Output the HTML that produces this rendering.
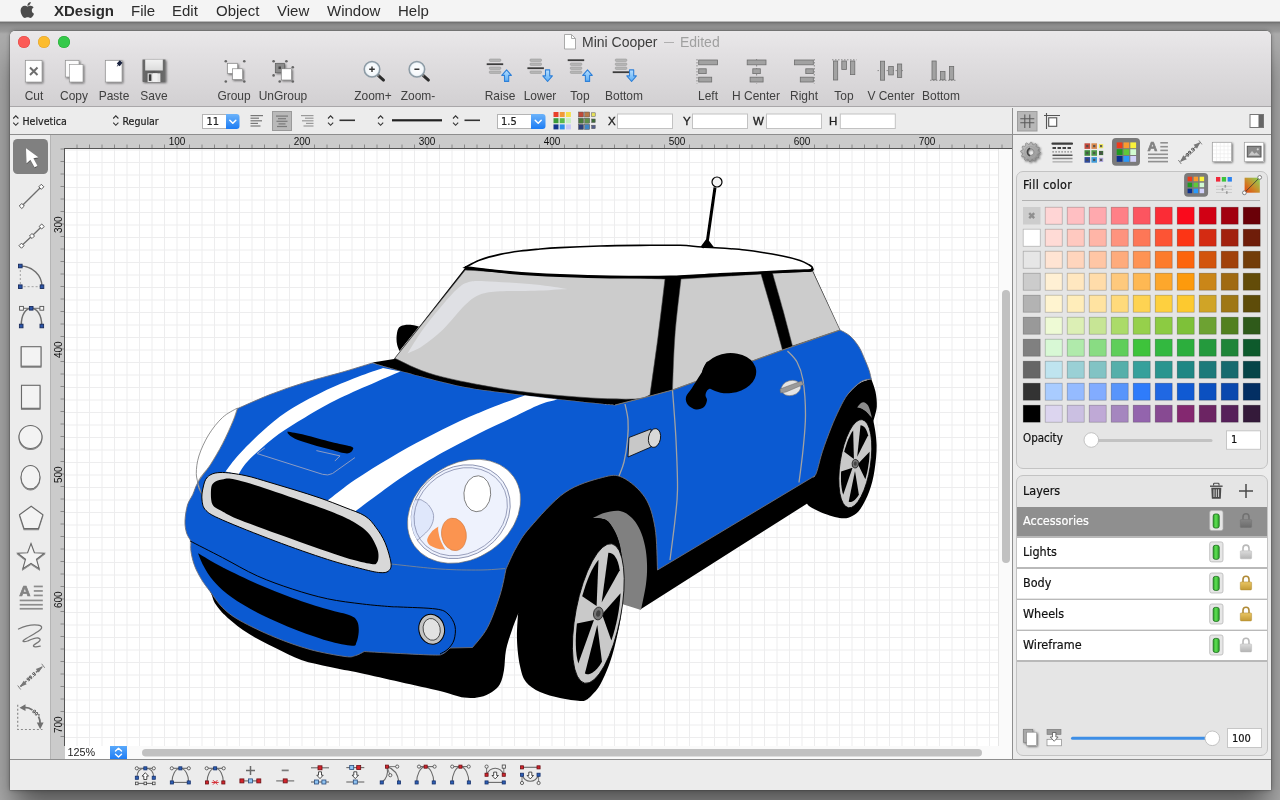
<!DOCTYPE html>
<html lang="en">
<head>
<meta charset="utf-8">
<title>XDesign - Mini Cooper</title>
<style>
*{box-sizing:border-box;margin:0;padding:0}
html,body{width:1280px;height:800px;overflow:hidden}
body{position:relative;background:#8d8d8d;-webkit-font-smoothing:antialiased;font-family:"Liberation Sans",sans-serif;color:#222}
.abs{position:absolute}
#desk{position:absolute;left:0;top:0;width:1280px;height:800px;background:#acacac}
#topstrip{position:absolute;left:0;top:22px;width:1280px;height:12px;background:linear-gradient(#6c6c6c 0,#868686 2px,#929292 5px,#999999 9px,rgba(153,153,153,0) 12px)}
#menubar{will-change:transform;position:absolute;left:0;top:0;width:1280px;height:22px;background:#f4f4f4;border-bottom:1px solid #b8b8b8}
#menubar span{position:absolute;top:2px;font-size:15px;line-height:18px;color:#2c2c2c;white-space:nowrap}
#win{will-change:transform;position:absolute;left:10px;top:31px;width:1261px;height:759px;background:#ececec;border-radius:5px 5px 0 0;box-shadow:0 0 0 .5px rgba(60,60,60,.45),0 0 5px rgba(0,0,0,.3),0 22px 30px -4px rgba(0,0,0,.52);overflow:hidden}
#tb{position:absolute;left:0;top:0;width:1261px;height:76px;background:linear-gradient(#eae8ea 0,#e2e0e2 30%,#d2d0d2 100%);border-bottom:1px solid #a9a7a9}
.tl{position:absolute;top:5px;width:12px;height:12px;border-radius:50%}
.tlab{position:absolute;top:57px;font-size:13px;line-height:15px;color:#404040;white-space:nowrap;transform:translateX(-50%) scaleX(.92)}
#fb{position:absolute;left:0;top:77px;width:1261px;height:27px;background:#ececec;border-bottom:1px solid #8e8e8e}
.hum{font-family:"DejaVu Sans Condensed","DejaVu Sans",sans-serif;-webkit-text-stroke:.2px}
#pal{position:absolute;left:0;top:104px;width:41px;height:624px;background:#ececec;border-right:1px solid #b5b5b5}
#rulh{position:absolute;left:41px;top:104px;width:961px;height:14px;background:#cbcbcb}
#rulv{position:absolute;left:41px;top:104px;width:14px;height:624px;background:#cbcbcb}
#canvas{position:absolute;left:54px;top:117px;width:935px;height:598px;background:#fff;overflow:hidden}
#vsb{position:absolute;left:988px;top:118px;width:14px;height:610px;background:#fafafa;border-left:1px solid #e6e6e6}
#hsb{position:absolute;left:55px;top:715px;width:934px;height:13px;background:#fafafa}
#vdiv{position:absolute;left:1002px;top:77px;width:1px;height:652px;background:#8e8e8e}
#bot{position:absolute;left:0;top:728px;width:1261px;height:31px;background:#ececec;border-top:1px solid #8e8e8e}
#rp{position:absolute;left:1003px;top:104px;width:258px;height:624px;background:#ececec}
</style>
</head>
<body>
<div id="desk"></div>
<div id="topstrip"></div>
<div id="menubar"><svg width="40" height="22" viewBox="0 0 40 22" style="position:absolute;left:0;top:0"><path transform="translate(20.45 0.86) scale(0.0357)" fill="#4b4b4b" d="M318.700 268.700c-.2-36.700 16.400-64.400 50-84.800-18.800-26.900-47.200-41.700-84.700-44.600-35.500-2.800-74.300 20.700-88.500 20.700-15 0-49.400-19.700-76.400-19.700C63.300 141.200 4 184.800 4 273.500q0 39.300 14.400 81.200c12.800 36.700 59 126.700 107.200 125.200 25.200-.6 43-17.900 75.800-17.900 31.800 0 48.300 17.900 76.400 17.900 48.600-.7 90.400-82.500 102.600-119.300-65.200-30.700-61.700-90-61.700-91.900zm-56.600-164.200c27.300-32.400 24.800-61.900 24-72.500-24.100 1.400-52 16.400-67.900 34.900-17.500 19.800-27.800 44.300-25.600 71.900 26.100 2 49.900-11.400 69.500-34.300z"/></svg>

<span style="left:54px;font-weight:bold">XDesign</span>
<span style="left:131px">File</span>
<span style="left:172px">Edit</span>
<span style="left:216px">Object</span>
<span style="left:277px">View</span>
<span style="left:327px">Window</span>
<span style="left:398px">Help</span>
</div>
<div id="win">
<div id="tb">
<div class="tl" style="left:8px;background:#fc5b57;box-shadow:inset 0 0 0 .5px #de4643"></div>
<div class="tl" style="left:28px;background:#fdbc2e;box-shadow:inset 0 0 0 .5px #dea033"></div>
<div class="tl" style="left:48px;background:#35c94a;box-shadow:inset 0 0 0 .5px #24a732"></div>
<div class="abs" style="left:572px;top:3px;font-size:14px;line-height:17px;white-space:nowrap;color:#3c3c3c">Mini Cooper<span style="color:#a0a0a0"><span style="font-size:10px;margin:0 6px 0 6.5px;position:relative;top:-2px">—</span>Edited</span></div>
<svg width="1280" height="110" viewBox="0 0 1280 110" style="position:absolute;left:-10px;top:-31px;overflow:visible">
<defs><filter id="ds" x="-20%" y="-20%" width="150%" height="150%"><feGaussianBlur in="SourceAlpha" stdDeviation="0.9"/><feOffset dx="0.5" dy="1" result="b"/><feComponentTransfer><feFuncA type="linear" slope="0.55"/></feComponentTransfer><feMerge><feMergeNode/><feMergeNode in="SourceGraphic"/></feMerge></filter><linearGradient id="gblue" x1="0" y1="0" x2="0" y2="1"><stop offset="0" stop-color="#b9e0ff"/><stop offset="1" stop-color="#58acf5"/></linearGradient><linearGradient id="gfl" x1="0" y1="0" x2="1" y2="0"><stop offset="0" stop-color="#6a6a6a"/><stop offset="0.5" stop-color="#585858"/><stop offset="1" stop-color="#6e6e6e"/></linearGradient><linearGradient id="glab" x1="0" y1="0" x2="0" y2="1"><stop offset="0" stop-color="#f2f2f2"/><stop offset="1" stop-color="#dcdcdc"/></linearGradient><radialGradient id="glens" cx="0.5" cy="0.5" r="0.5"><stop offset="0" stop-color="#ffffff"/><stop offset="0.75" stop-color="#f4f8fb"/><stop offset="1" stop-color="#c5d4de"/></radialGradient></defs>
<path d="M564.500 34.500h7l4 4v10.500h-11z" fill="#fff" stroke="#a2a2a2" stroke-width="0.9"/><path d="M571.500 34.500v4h4" fill="none" stroke="#a2a2a2" stroke-width="0.9"/>
<g filter="url(#ds)"><rect x="25.500" y="60.500" width="16.500" height="21.500" fill="#fff" stroke="#8a8a8a" stroke-width="0.6"/></g>
<path d="M30 67.500l7.500 7.500M37.500 67.500l-7.500 7.500" stroke="#6e6e6e" stroke-width="2" fill="none"/>
<g filter="url(#ds)"><rect x="65.500" y="60.500" width="13.500" height="16.500" fill="#fafafa" stroke="#8a8a8a" stroke-width="0.6"/><rect x="69.500" y="64.500" width="13.500" height="17.500" fill="#fff" stroke="#8a8a8a" stroke-width="0.6"/></g>
<g filter="url(#ds)"><rect x="105.500" y="60.500" width="16.500" height="21.500" fill="#fff" stroke="#8a8a8a" stroke-width="0.6"/></g>
<path d="M119.800 60.300l-3 3.200 1.200 1.200-1.300 1.500 0.400 0.300 1.400-1.300 1.200 1.100 2.800-3.500z" fill="#1b2440"/>
<g filter="url(#ds)"><path d="M142.500 59.500h23v22.500h-22.500l-0.500-0.500z" fill="url(#gfl)"/></g>
<rect x="145.200" y="59.500" width="17.600" height="11" fill="url(#glab)"/>
<rect x="147.600" y="73.300" width="12.800" height="8.700" fill="#e4e4e4"/><rect x="148.800" y="74.300" width="2.600" height="6.600" fill="#3a3a3a"/><rect x="153" y="73.300" width="4.500" height="8.700" fill="#f0f0f0"/>
<g filter="url(#ds)"><rect x="227.500" y="63.300" width="10.200" height="10.200" fill="#fff" stroke="#777" stroke-width="0.6"/><rect x="232.500" y="68.800" width="10.200" height="10.700" fill="#fff" stroke="#777" stroke-width="0.6"/></g>
<circle cx="225.8" cy="61.2" r="1.300" fill="#666"/>
<circle cx="244.3" cy="61.2" r="1.300" fill="#666"/>
<circle cx="225.8" cy="81.5" r="1.300" fill="#666"/>
<circle cx="244.3" cy="81.5" r="1.300" fill="#666"/>
<g filter="url(#ds)"><rect x="275.300" y="63.300" width="9.200" height="9.500" fill="#8c8c8c" stroke="#555" stroke-width="0.6"/><rect x="281.300" y="68.800" width="10.200" height="11.200" fill="#fff" stroke="#777" stroke-width="0.6"/></g>
<rect x="278.500" y="66.500" width="2.500" height="2.500" fill="#444"/>
<circle cx="273.6" cy="61.2" r="1.300" fill="#666"/>
<circle cx="286.4" cy="61.2" r="1.300" fill="#666"/>
<circle cx="273.6" cy="75.4" r="1.300" fill="#666"/>
<circle cx="292.8" cy="67.3" r="1.300" fill="#666"/>
<circle cx="292.8" cy="81.5" r="1.300" fill="#666"/>
<circle cx="279.7" cy="81.5" r="1.300" fill="#666"/>
<path d="M378.5 75.6L383.5 80.1" stroke="#2c2c2c" stroke-width="3" stroke-linecap="round"/>
<path d="M377.0 74.3L379.0 76.1" stroke="#777" stroke-width="1.600"/>
<circle cx="372.0" cy="69.3" r="7.800" fill="url(#glens)" stroke="#8d9ba5" stroke-width="1.500"/>
<path d="M369.2 69.3h5.600M372.0 66.5v5.600" stroke="#333" stroke-width="1.400"/>
<path d="M423.4 75.6L428.4 80.1" stroke="#2c2c2c" stroke-width="3" stroke-linecap="round"/>
<path d="M421.9 74.3L423.9 76.1" stroke="#777" stroke-width="1.600"/>
<circle cx="416.9" cy="69.3" r="7.800" fill="url(#glens)" stroke="#8d9ba5" stroke-width="1.500"/>
<path d="M414.4 69.3h5" stroke="#333" stroke-width="1.500"/>
<rect x="489.3" y="59.0" width="11.500" height="2.400" rx="0.800" fill="#b8b8b8" stroke="#8e8e8e" stroke-width="0.5"/>
<rect x="486.7" y="63.3" width="16.500" height="1.800" fill="#3c3c3c"/>
<rect x="489.3" y="67.0" width="11.500" height="2.400" rx="0.800" fill="#b8b8b8" stroke="#8e8e8e" stroke-width="0.5"/>
<rect x="489.3" y="71.0" width="11.500" height="2.400" rx="0.800" fill="#b8b8b8" stroke="#8e8e8e" stroke-width="0.5"/>
<path d="M506.6 69.800l4.800 5.600h-2.700v6h-4.200v-6h-2.700z" fill="url(#gblue)" stroke="#2f80d8" stroke-width="1.1" stroke-linejoin="round"/>
<rect x="530.0" y="59.0" width="11.500" height="2.400" rx="0.800" fill="#b8b8b8" stroke="#8e8e8e" stroke-width="0.5"/>
<rect x="530.0" y="63.0" width="11.500" height="2.400" rx="0.800" fill="#b8b8b8" stroke="#8e8e8e" stroke-width="0.5"/>
<rect x="527.4" y="67.3" width="16.500" height="1.800" fill="#3c3c3c"/>
<rect x="530.0" y="71.0" width="11.500" height="2.400" rx="0.800" fill="#b8b8b8" stroke="#8e8e8e" stroke-width="0.5"/>
<path d="M547.6 81.500l4.800-5.600h-2.700v-6h-4.200v6h-2.700z" fill="url(#gblue)" stroke="#2f80d8" stroke-width="1.1" stroke-linejoin="round"/>
<rect x="567.7" y="59.3" width="16.500" height="1.800" fill="#3c3c3c"/>
<rect x="570.3" y="63.0" width="11.500" height="2.400" rx="0.800" fill="#b8b8b8" stroke="#8e8e8e" stroke-width="0.5"/>
<rect x="570.3" y="67.0" width="11.500" height="2.400" rx="0.800" fill="#b8b8b8" stroke="#8e8e8e" stroke-width="0.5"/>
<rect x="570.3" y="71.0" width="11.500" height="2.400" rx="0.800" fill="#b8b8b8" stroke="#8e8e8e" stroke-width="0.5"/>
<path d="M587.5 69.800l4.800 5.600h-2.700v6h-4.200v-6h-2.700z" fill="url(#gblue)" stroke="#2f80d8" stroke-width="1.1" stroke-linejoin="round"/>
<rect x="615.3" y="59.0" width="11.500" height="2.400" rx="0.800" fill="#b8b8b8" stroke="#8e8e8e" stroke-width="0.5"/>
<rect x="615.3" y="63.0" width="11.500" height="2.400" rx="0.800" fill="#b8b8b8" stroke="#8e8e8e" stroke-width="0.5"/>
<rect x="615.3" y="67.0" width="11.500" height="2.400" rx="0.800" fill="#b8b8b8" stroke="#8e8e8e" stroke-width="0.5"/>
<rect x="612.7" y="71.3" width="16.500" height="1.800" fill="#3c3c3c"/>
<path d="M631.6 81.500l4.800-5.600h-2.700v-6h-4.200v6h-2.700z" fill="url(#gblue)" stroke="#2f80d8" stroke-width="1.1" stroke-linejoin="round"/>
<path d="M697 59V83.500" stroke="#777" stroke-width="0.8" stroke-dasharray="1.500 1.500" fill="none"/>
<rect x="698.7" y="60.0" width="18.8" height="4.8" fill="#a2a2a2" stroke="#6e6e6e" stroke-width="0.8"/>
<rect x="698.7" y="68.8" width="7.5" height="4.8" fill="#a2a2a2" stroke="#6e6e6e" stroke-width="0.8"/>
<rect x="698.7" y="77.2" width="13.0" height="4.8" fill="#a2a2a2" stroke="#6e6e6e" stroke-width="0.8"/>
<path d="M756.600 59V83.500" stroke="#777" stroke-width="0.8" stroke-dasharray="1.500 1.500" fill="none"/>
<rect x="747.2" y="60.0" width="18.8" height="4.8" fill="#a2a2a2" stroke="#6e6e6e" stroke-width="0.8"/>
<rect x="752.8" y="68.8" width="7.5" height="4.8" fill="#a2a2a2" stroke="#6e6e6e" stroke-width="0.8"/>
<rect x="750.1" y="77.2" width="13.0" height="4.8" fill="#a2a2a2" stroke="#6e6e6e" stroke-width="0.8"/>
<path d="M814.300 59V83.500" stroke="#777" stroke-width="0.8" stroke-dasharray="1.500 1.500" fill="none"/>
<rect x="794.5" y="60.0" width="18.8" height="4.8" fill="#a2a2a2" stroke="#6e6e6e" stroke-width="0.8"/>
<rect x="805.8" y="68.8" width="7.5" height="4.8" fill="#a2a2a2" stroke="#6e6e6e" stroke-width="0.8"/>
<rect x="800.3" y="77.2" width="13.0" height="4.8" fill="#a2a2a2" stroke="#6e6e6e" stroke-width="0.8"/>
<path d="M832 59.800H856.500" stroke="#777" stroke-width="0.8" stroke-dasharray="1.500 1.500" fill="none"/>
<rect x="833.5" y="61.0" width="4.2" height="19.0" fill="#a2a2a2" stroke="#6e6e6e" stroke-width="0.8"/>
<rect x="841.8" y="61.0" width="4.6" height="8.5" fill="#a2a2a2" stroke="#6e6e6e" stroke-width="0.8"/>
<rect x="850.6" y="61.0" width="4.2" height="13.6" fill="#a2a2a2" stroke="#6e6e6e" stroke-width="0.8"/>
<path d="M877.500 70.600H904" stroke="#777" stroke-width="0.8" stroke-dasharray="1.500 1.500" fill="none"/>
<rect x="880.4" y="61.2" width="4.2" height="19.0" fill="#a2a2a2" stroke="#6e6e6e" stroke-width="0.8"/>
<rect x="888.7" y="66.4" width="4.6" height="8.5" fill="#a2a2a2" stroke="#6e6e6e" stroke-width="0.8"/>
<rect x="897.5" y="64.0" width="4.2" height="13.4" fill="#a2a2a2" stroke="#6e6e6e" stroke-width="0.8"/>
<path d="M930 80.300H956" stroke="#777" stroke-width="0.8" stroke-dasharray="1.500 1.500" fill="none"/>
<rect x="932.0" y="61.0" width="4.2" height="18.8" fill="#a2a2a2" stroke="#6e6e6e" stroke-width="0.8"/>
<rect x="940.6" y="71.5" width="4.4" height="8.3" fill="#a2a2a2" stroke="#6e6e6e" stroke-width="0.8"/>
<rect x="949.5" y="66.4" width="4.2" height="13.4" fill="#a2a2a2" stroke="#6e6e6e" stroke-width="0.8"/>
</svg>
<div class="tlab" style="left:23.5px">Cut</div>
<div class="tlab" style="left:63.5px">Copy</div>
<div class="tlab" style="left:103.5px">Paste</div>
<div class="tlab" style="left:143.5px">Save</div>
<div class="tlab" style="left:224.0px">Group</div>
<div class="tlab" style="left:272.6px">UnGroup</div>
<div class="tlab" style="left:363.0px">Zoom+</div>
<div class="tlab" style="left:408.0px">Zoom-</div>
<div class="tlab" style="left:489.5px">Raise</div>
<div class="tlab" style="left:530.0px">Lower</div>
<div class="tlab" style="left:570.0px">Top</div>
<div class="tlab" style="left:614.0px">Bottom</div>
<div class="tlab" style="left:697.6px">Left</div>
<div class="tlab" style="left:745.5px">H Center</div>
<div class="tlab" style="left:793.6px">Right</div>
<div class="tlab" style="left:833.5px">Top</div>
<div class="tlab" style="left:880.5px">V Center</div>
<div class="tlab" style="left:931.0px">Bottom</div>
</div>
<div id="fb"><svg width="1280" height="30" viewBox="0 108 1280 30" style="position:absolute;left:-10px;top:0;overflow:visible">
<defs><linearGradient id="gbtn" x1="0" y1="0" x2="0" y2="1"><stop offset="0" stop-color="#6cb3fa"/><stop offset="1" stop-color="#1c7cf4"/></linearGradient></defs>
<path d="M13.2 118.5l2.600-2.600 2.600 2.600M13.2 122.7l2.600 2.600 2.600-2.600" stroke="#333" stroke-width="1.100" fill="none"/>
<path d="M113.2 118.5l2.600-2.600 2.600 2.600M113.2 122.7l2.600 2.600 2.600-2.600" stroke="#333" stroke-width="1.100" fill="none"/>
<rect x="202.5" y="114.5" width="34.0" height="14.0" fill="#fff" stroke="#b4b4b4" stroke-width="1"/>
<path d="M226.0 114.0H236.5a3 3 0 0 1 3 3V126.0a3 3 0 0 1-3 3H226.0Z" fill="url(#gbtn)"/>
<path d="M229.8 120.3l3 3 3-3" stroke="#fff" stroke-width="1.500" fill="none" stroke-linecap="round" stroke-linejoin="round"/>
<rect x="497.5" y="114.5" width="45.0" height="14.0" fill="#fff" stroke="#b4b4b4" stroke-width="1"/>
<path d="M531.0 114.0H542.5a3 3 0 0 1 3 3V126.0a3 3 0 0 1-3 3H531.0Z" fill="url(#gbtn)"/>
<path d="M535.2 120.3l3 3 3-3" stroke="#fff" stroke-width="1.500" fill="none" stroke-linecap="round" stroke-linejoin="round"/>
<rect x="250.5" y="115.0" width="12.5" height="1.200" fill="#777"/>
<rect x="250.5" y="117.6" width="8.5" height="1.200" fill="#777"/>
<rect x="250.5" y="120.2" width="11.5" height="1.200" fill="#777"/>
<rect x="250.5" y="122.8" width="7.5" height="1.200" fill="#777"/>
<rect x="250.5" y="125.4" width="10.0" height="1.200" fill="#777"/>
<rect x="272.500" y="111.500" width="19" height="19" fill="#b9b9b9" stroke="#9a9a9a" stroke-width="1"/>
<rect x="276.0" y="115.5" width="12.0" height="1.200" fill="#7a7a7a"/>
<rect x="278.0" y="118.1" width="8.0" height="1.200" fill="#7a7a7a"/>
<rect x="276.5" y="120.7" width="11.0" height="1.200" fill="#7a7a7a"/>
<rect x="278.5" y="123.3" width="7.0" height="1.200" fill="#7a7a7a"/>
<rect x="277.0" y="125.9" width="10.0" height="1.200" fill="#7a7a7a"/>
<rect x="301.0" y="115.0" width="12.5" height="1.200" fill="#999"/>
<rect x="305.0" y="117.6" width="8.5" height="1.200" fill="#999"/>
<rect x="302.0" y="120.2" width="11.5" height="1.200" fill="#999"/>
<rect x="306.0" y="122.8" width="7.5" height="1.200" fill="#999"/>
<rect x="303.5" y="125.4" width="10.0" height="1.200" fill="#999"/>
<path d="M328.0 118.5l2.600-2.600 2.600 2.600M328.0 122.7l2.600 2.600 2.600-2.600" stroke="#333" stroke-width="1.100" fill="none"/>
<rect x="339.500" y="119.500" width="15.500" height="1.600" fill="#333"/>
<path d="M378.0 118.5l2.600-2.600 2.600 2.600M378.0 122.7l2.600 2.600 2.600-2.600" stroke="#333" stroke-width="1.100" fill="none"/>
<rect x="392" y="119.200" width="50" height="2.200" fill="#222"/>
<path d="M453.0 118.5l2.600-2.600 2.600 2.600M453.0 122.7l2.600 2.600 2.600-2.600" stroke="#333" stroke-width="1.100" fill="none"/>
<rect x="464.500" y="119.500" width="15.500" height="1.600" fill="#333"/>
<rect x="553.5" y="112.0" width="5" height="5" fill="#e8402a"/>
<rect x="559.7" y="112.0" width="5" height="5" fill="#f19a38"/>
<rect x="565.9" y="112.0" width="5" height="5" fill="#f5e04a"/>
<rect x="553.5" y="118.2" width="5" height="5" fill="#3a9a3a"/>
<rect x="559.7" y="118.2" width="5" height="5" fill="#59b94a"/>
<rect x="565.9" y="118.2" width="5" height="5" fill="#c8eec0"/>
<rect x="553.5" y="124.4" width="5" height="5" fill="#14358c"/>
<rect x="559.7" y="124.4" width="5" height="5" fill="#2e8eea"/>
<rect x="565.9" y="124.4" width="5" height="5" fill="#c9c8f5"/>
<rect x="578.5" y="112.0" width="5.0" height="5.0" fill="#c04a38" stroke="#555" stroke-width="0.5"/>
<rect x="584.7" y="112.0" width="5.0" height="5.0" fill="#b77a48" stroke="#555" stroke-width="0.5"/>
<rect x="591.7" y="112.8" width="3.5" height="3.5" fill="#e8e25a" stroke="#555" stroke-width="0.5"/>
<rect x="578.5" y="118.2" width="5.0" height="5.0" fill="#4a7a3c" stroke="#555" stroke-width="0.5"/>
<rect x="584.7" y="118.2" width="5.0" height="5.0" fill="#5f8f4c" stroke="#555" stroke-width="0.5"/>
<rect x="591.7" y="119.0" width="3.5" height="3.5" fill="#3e6a38" stroke="#555" stroke-width="0.5"/>
<rect x="578.5" y="124.4" width="5.0" height="5.0" fill="#2c3f7a" stroke="#555" stroke-width="0.5"/>
<rect x="584.7" y="124.4" width="5.0" height="5.0" fill="#3f86c4" stroke="#555" stroke-width="0.5"/>
<rect x="591.7" y="125.2" width="3.5" height="3.5" fill="#55608a" stroke="#555" stroke-width="0.5"/>
<rect x="617.5" y="114" width="55.0" height="14.500" fill="#fff" stroke="#c2c2c2" stroke-width="1"/>
<rect x="692.5" y="114" width="55.0" height="14.500" fill="#fff" stroke="#c2c2c2" stroke-width="1"/>
<rect x="766.5" y="114" width="55.0" height="14.500" fill="#fff" stroke="#c2c2c2" stroke-width="1"/>
<rect x="840.3" y="114" width="55.0" height="14.500" fill="#fff" stroke="#c2c2c2" stroke-width="1"/>
<rect x="1017.500" y="111.500" width="19.500" height="19.500" fill="#b7b7b7" stroke="#9c9c9c" stroke-width="1"/>
<path d="M1024.800 114.500V128M1029.800 114.500V128M1020.300 118.800H1034.300M1020.300 122.700H1034.300" stroke="#5a5a5a" stroke-width="1.100" fill="none"/>
<path d="M1046.500 113V129M1044 115.500H1060" stroke="#555" stroke-width="1.100" fill="none"/><rect x="1048.700" y="117.800" width="8" height="8.500" fill="#fff" stroke="#555" stroke-width="1.100"/>
<rect x="1250" y="114.500" width="13.500" height="13" fill="#fff" stroke="#777" stroke-width="1"/><rect x="1258.500" y="115" width="4.500" height="12" fill="#666"/>
</svg>
<div class="abs hum" style="left:12.5px;top:6.0px;font-size:10.5px;line-height:14px;white-space:nowrap;color:#222;">Helvetica</div>
<div class="abs hum" style="left:112.5px;top:6.0px;font-size:10.5px;line-height:14px;white-space:nowrap;color:#222;">Regular</div>
<div class="abs hum" style="left:196.5px;top:7.0px;font-size:11px;line-height:14px;white-space:nowrap;color:#222;">11</div>
<div class="abs hum" style="left:491.0px;top:7.0px;font-size:11px;line-height:14px;white-space:nowrap;color:#222;">1.5</div>
<div class="abs " style="left:598.0px;top:6.0px;font-size:11.5px;line-height:14px;white-space:nowrap;color:#222;-webkit-text-stroke:.35px;color:#222">X</div>
<div class="abs " style="left:673.0px;top:6.0px;font-size:11.5px;line-height:14px;white-space:nowrap;color:#222;-webkit-text-stroke:.35px">Y</div>
<div class="abs " style="left:743.0px;top:6.0px;font-size:11.5px;line-height:14px;white-space:nowrap;color:#222;-webkit-text-stroke:.35px">W</div>
<div class="abs " style="left:819.0px;top:6.0px;font-size:11.5px;line-height:14px;white-space:nowrap;color:#222;-webkit-text-stroke:.35px">H</div></div>
<div id="pal"><svg width="1280" height="800" viewBox="0 0 1280 800" style="position:absolute;left:-10px;top:-135px;overflow:visible">
<defs><filter id="ds2" x="-20%" y="-20%" width="150%" height="150%"><feGaussianBlur in="SourceAlpha" stdDeviation="0.7"/><feOffset dx="0.3" dy="0.8"/><feComponentTransfer><feFuncA type="linear" slope="0.45"/></feComponentTransfer><feMerge><feMergeNode/><feMergeNode in="SourceGraphic"/></feMerge></filter></defs>
<rect x="13" y="139" width="35" height="35" rx="4.500" fill="#808080"/>
<g filter="url(#ds2)"><path d="M26 148.200L26.600 163.200L30.400 159.800L34.600 167.300L37.400 165.700L33.300 158.300L38.300 157.300Z" fill="#fff"/></g>
<path d="M21.800 206L41.300 186.800" stroke="#6e6e6e" stroke-width="1.300"/>
<rect x="20.0" y="204.2" width="3.6" height="3.6" fill="#fff" stroke="#555" stroke-width="0.9" transform="rotate(45 21.8 206.0)"/>
<rect x="39.5" y="185.0" width="3.6" height="3.6" fill="#fff" stroke="#555" stroke-width="0.9" transform="rotate(45 41.3 186.8)"/>
<path d="M21.500 245.700L32 236L41.700 226.500" stroke="#6e6e6e" stroke-width="1.300"/>
<rect x="19.7" y="243.9" width="3.6" height="3.6" fill="#fff" stroke="#555" stroke-width="0.9" transform="rotate(45 21.5 245.7)"/>
<rect x="30.2" y="234.2" width="3.6" height="3.6" fill="#fff" stroke="#555" stroke-width="0.9" transform="rotate(45 32.0 236.0)"/>
<rect x="39.9" y="224.7" width="3.6" height="3.6" fill="#fff" stroke="#555" stroke-width="0.9" transform="rotate(45 41.7 226.5)"/>
<path d="M20.300 266V286.700H42" stroke="#999" stroke-width="0.9" stroke-dasharray="2 2" fill="none"/>
<path d="M20.300 266A21.500 20.700 0 0 1 42 286.700" stroke="#6e6e6e" stroke-width="1.500" fill="none"/>
<rect x="18.5" y="264.2" width="3.6" height="3.6" fill="#2a55a8" stroke="#1a2c5c" stroke-width="0.9"/>
<rect x="40.2" y="284.9" width="3.6" height="3.6" fill="#2a55a8" stroke="#1a2c5c" stroke-width="0.9"/>
<rect x="18.5" y="284.9" width="3.6" height="3.6" fill="#2a55a8" stroke="#1a2c5c" stroke-width="0.9"/>
<path d="M21.500 308.300H41.750" stroke="#6e6e6e" stroke-width="1"/>
<path d="M21.200 326C21.200 314 26 308.300 31.250 308.300C36.500 308.300 41.750 314 41.750 326" stroke="#6e6e6e" stroke-width="1.500" fill="none"/>
<rect x="19.6" y="306.4" width="3.8" height="3.8" fill="#f4f4f4" stroke="#555" stroke-width="0.9"/>
<rect x="39.9" y="306.4" width="3.8" height="3.8" fill="#f4f4f4" stroke="#555" stroke-width="0.9"/>
<rect x="29.4" y="306.5" width="3.6" height="3.6" fill="#2a55a8" stroke="#1a2c5c" stroke-width="0.9"/>
<rect x="19.4" y="324.2" width="3.6" height="3.6" fill="#2a55a8" stroke="#1a2c5c" stroke-width="0.9"/>
<rect x="40.0" y="324.2" width="3.6" height="3.6" fill="#2a55a8" stroke="#1a2c5c" stroke-width="0.9"/>
<g filter="url(#ds2)" fill="#f3f3f3" stroke="#6a6a6a" stroke-width="1.100">
<rect x="21.200" y="346.700" width="19.800" height="19.500"/>
<rect x="21.500" y="385.300" width="18.500" height="23"/>
<circle cx="30.500" cy="437" r="11.500"/>
<ellipse cx="30.500" cy="477.200" rx="9.500" ry="11.700"/>
<path d="M31.2 506.3L42.9 514.8L38.4 528.6L24.0 528.6L19.5 514.8Z"/>
<path d="M31.0 543.5L34.4 552.8L44.3 553.2L36.5 559.3L39.2 568.8L31.0 563.3L22.8 568.8L25.5 559.3L17.7 553.2L27.6 552.8Z"/>
</g>
<text x="19.200" y="596.200" font-family="Liberation Sans,sans-serif" font-weight="bold" font-size="15.500" fill="#838383" stroke="#838383" stroke-width="0.700">A</text>
<rect x="33.800" y="585.6" width="9" height="1.700" fill="#8c8c8c"/>
<rect x="33.800" y="590.1" width="9" height="1.700" fill="#8c8c8c"/>
<rect x="33.800" y="594.6" width="9" height="1.700" fill="#8c8c8c"/>
<rect x="19.700" y="599.6" width="23.100" height="1.700" fill="#8c8c8c"/>
<rect x="19.700" y="603.9" width="23.100" height="1.700" fill="#8c8c8c"/>
<rect x="19.700" y="607.9" width="23.100" height="1.700" fill="#8c8c8c"/>
<path d="M18.500 629C25 626 33 624.500 38 625.200C42.500 625.800 42.500 628 40 630C35 634 27 637.500 23.700 640.200C21.500 642 25 642 27.500 641C31 639.500 35.500 637.500 38 638C40.500 638.500 40.500 640 39.500 641C37.500 643 34 644.500 33.500 645.500C33 647 36 647.200 40.200 646.200" stroke="#777" stroke-width="1.300" fill="none" stroke-linecap="round"/>
<g stroke="#777" fill="#777"><path d="M17.700 685.500L20.700 689.500M41.700 663.800L44.700 667.800" stroke-width="0.9"/><path d="M20.500 686.400L26.500 681M36 672.400L42 667" stroke-width="1.600"/><path d="M19.600 687.200L26.700 684.300L23.700 680.800ZM42.900 666.200L35.800 669.100L38.800 672.600Z" stroke="none"/></g>
<text x="31.300" y="678.600" font-family="Liberation Sans,sans-serif" font-weight="bold" font-size="5.500" fill="#333" text-anchor="middle" transform="rotate(-42 31.300 676.700)">99.9</text>
<path d="M17.700 704.700V729.500H42.500" stroke="#8a8a8a" stroke-width="1.200" stroke-dasharray="2 2" fill="none"/>
<path d="M23 707.500C27 707.300 30.500 708.500 32.500 710M38.500 716.500C39.800 719 40.200 721.500 40.200 724" stroke="#707070" stroke-width="1.700" fill="none"/>
<path d="M19.500 707.800L25.500 704.200L25.500 711ZM40.200 729.200L36.800 722.600L43.600 722.600Z" fill="#707070"/>
<text x="36" y="715.300" font-family="Liberation Sans,sans-serif" font-weight="bold" font-size="5.500" fill="#333" text-anchor="middle" transform="rotate(45 36 713.500)">90°</text>
</svg></div>
<div id="rulh"></div>
<div id="rulv"></div>
<div id="canvas"><svg width="935" height="598" viewBox="64 148 935 598" style="position:absolute;left:0;top:0">
<path d="M64.5 148V746M77.0 148V746M89.5 148V746M102.0 148V746M114.5 148V746M127.0 148V746M139.5 148V746M152.0 148V746M164.5 148V746M177.0 148V746M189.5 148V746M202.0 148V746M214.5 148V746M227.0 148V746M239.5 148V746M252.0 148V746M264.5 148V746M277.0 148V746M289.5 148V746M302.0 148V746M314.5 148V746M327.0 148V746M339.5 148V746M352.0 148V746M364.5 148V746M377.0 148V746M389.5 148V746M402.0 148V746M414.5 148V746M427.0 148V746M439.5 148V746M452.0 148V746M464.5 148V746M477.0 148V746M489.5 148V746M502.0 148V746M514.5 148V746M527.0 148V746M539.5 148V746M552.0 148V746M564.5 148V746M577.0 148V746M589.5 148V746M602.0 148V746M614.5 148V746M627.0 148V746M639.5 148V746M652.0 148V746M664.5 148V746M677.0 148V746M689.5 148V746M702.0 148V746M714.5 148V746M727.0 148V746M739.5 148V746M752.0 148V746M764.5 148V746M777.0 148V746M789.5 148V746M802.0 148V746M814.5 148V746M827.0 148V746M839.5 148V746M852.0 148V746M864.5 148V746M877.0 148V746M889.5 148V746M902.0 148V746M914.5 148V746M927.0 148V746M939.5 148V746M952.0 148V746M964.5 148V746M977.0 148V746M989.5 148V746M64 150.0H998M64 162.5H998M64 175.0H998M64 187.5H998M64 200.0H998M64 212.5H998M64 225.0H998M64 237.5H998M64 250.0H998M64 262.5H998M64 275.0H998M64 287.5H998M64 300.0H998M64 312.5H998M64 325.0H998M64 337.5H998M64 350.0H998M64 362.5H998M64 375.0H998M64 387.5H998M64 400.0H998M64 412.5H998M64 425.0H998M64 437.5H998M64 450.0H998M64 462.5H998M64 475.0H998M64 487.5H998M64 500.0H998M64 512.5H998M64 525.0H998M64 537.5H998M64 550.0H998M64 562.5H998M64 575.0H998M64 587.5H998M64 600.0H998M64 612.5H998M64 625.0H998M64 637.5H998M64 650.0H998M64 662.5H998M64 675.0H998M64 687.5H998M64 700.0H998M64 712.5H998M64 725.0H998M64 737.5H998" stroke="#ededee" stroke-width="1" fill="none"/>
<path d="M64.5 148V746M64 148.5H999" stroke="#555" stroke-width="1" fill="none"/>
<path d="M195.0 560.0C197.6 565.3 206.9 584.5 210.3 591.8C213.7 599.1 212.6 599.6 215.5 604.0C218.4 608.4 222.2 613.0 227.8 618.0C233.4 623.0 240.9 628.8 248.8 633.8C256.7 638.8 266.2 643.4 275.0 647.8C283.8 652.2 292.1 656.8 301.3 660.0C310.5 663.2 320.2 664.8 330.0 667.0C339.8 669.2 348.3 670.5 360.0 673.0C371.7 675.5 386.7 679.0 400.0 682.0C413.3 685.0 429.3 688.4 440.0 691.0C450.7 693.6 457.3 696.6 464.0 697.6C470.7 698.6 475.3 697.9 480.0 697.0C484.7 696.1 488.7 694.2 492.0 692.0C495.3 689.8 498.0 687.7 500.0 684.0C502.0 680.3 503.0 675.7 504.0 670.0C505.0 664.3 504.7 656.7 506.0 650.0C507.3 643.3 510.0 636.0 512.0 630.0C514.0 624.0 517.0 616.7 518.0 614.0L560.0 585.0L641.0 609.0L808.0 503.0L815.0 470.0L660.0 560.0L650.0 480.0L600.0 470.0L520.0 520.0L480.0 600.0L300.0 560.0L195.0 560.0Z" fill="#000" />
<path d="M871.3 379.0C872.0 381.1 874.6 387.2 875.5 391.8C876.4 396.4 877.1 401.8 876.8 406.7C876.4 411.6 874.0 418.6 873.4 421.0L860.0 490.0L808.0 504.0L800.0 490.0L815.0 476.0C815.8 470.0 816.7 451.0 820.0 440.0C823.3 429.0 830.0 418.0 835.0 410.0C840.0 402.0 845.8 396.5 850.0 392.0C854.2 387.5 856.5 385.2 860.0 383.0C863.5 380.8 869.4 379.7 871.3 379.0Z" fill="#000" />
<path d="M593.0 518.0C594.8 517.2 599.5 514.2 604.0 513.0C608.5 511.8 615.3 510.2 620.0 511.0C624.7 511.8 628.7 514.8 632.0 518.0C635.3 521.2 637.8 525.3 640.0 530.0C642.2 534.7 643.8 540.3 645.0 546.0C646.2 551.7 646.8 557.7 647.0 564.0C647.2 570.3 647.0 576.3 646.0 584.0C645.0 591.7 641.8 605.7 641.0 610.0L622.0 604.0C622.2 598.7 623.3 581.7 623.0 572.0C622.7 562.3 621.5 553.0 620.0 546.0C618.5 539.0 616.3 534.3 614.0 530.0C611.7 525.7 609.5 522.0 606.0 520.0C602.5 518.0 595.2 518.3 593.0 518.0Z" fill="#808080" />
<path d="M856.5 408.5C857.1 407.8 858.8 405.0 860.0 404.0C861.2 403.0 862.1 402.0 863.5 402.3C864.9 402.6 866.8 403.5 868.1 405.6C869.4 407.8 870.6 412.5 871.3 415.2C871.9 417.9 871.9 420.9 872.0 422.0C871.5 420.8 870.2 416.8 869.0 415.0C867.8 413.2 866.4 412.1 865.0 411.0C863.6 409.9 862.1 408.8 860.7 408.4C859.3 408.0 857.2 408.5 856.5 408.5Z" fill="#8c8c8c" />
<path d="M372.5 363.0C367.1 364.6 351.2 369.6 340.0 372.8C328.8 376.0 316.7 378.8 305.0 382.4C293.3 386.0 281.2 390.2 270.0 394.6C258.8 399.0 242.9 406.3 237.5 408.6C236.8 410.7 235.5 415.1 233.0 421.0C230.5 426.9 226.3 436.5 222.5 443.8C218.7 451.1 214.4 458.4 210.3 464.8C206.2 471.2 200.9 477.4 198.0 482.3C195.1 487.2 194.6 490.7 192.8 494.5C191.1 498.3 188.8 500.6 187.5 505.0C186.2 509.4 185.2 516.1 185.0 520.8C184.8 525.5 185.6 529.6 186.6 533.0C187.6 536.4 190.3 539.7 191.0 541.0C191.0 542.8 190.4 547.4 191.0 551.5C191.6 555.6 192.8 560.8 194.5 565.5C196.2 570.2 198.9 575.1 201.5 579.5C204.1 583.9 206.8 587.1 210.3 591.8C213.8 596.5 217.6 602.7 222.5 607.5C227.4 612.3 231.2 615.6 240.0 620.6C248.8 625.6 263.3 632.5 275.0 637.3C286.7 642.1 298.3 646.3 310.0 649.5C321.7 652.7 337.4 655.5 345.0 656.5C352.6 657.5 352.3 656.4 355.5 655.6C358.7 654.8 362.8 652.2 364.3 651.5C368.6 651.8 378.6 652.4 390.0 653.0C401.4 653.6 423.8 654.8 432.5 655.0C441.2 655.2 439.6 655.2 442.5 654.0C445.4 652.8 448.8 649.0 450.0 648.0L472.5 647.5C475.0 644.2 482.9 636.2 487.5 627.5C492.1 618.8 496.9 604.8 500.0 595.0C503.1 585.2 505.0 573.3 506.0 569.0C507.7 565.5 512.0 554.9 516.0 548.0C520.0 541.1 521.8 536.8 530.0 527.5C538.2 518.2 552.9 500.8 565.0 492.5C577.1 484.2 592.9 480.0 602.5 477.5C612.1 475.0 615.4 474.2 622.5 477.5C629.6 480.8 639.6 489.2 645.0 497.5C650.4 505.8 652.9 515.4 655.0 527.5C657.1 539.6 657.1 562.9 657.5 570.0L815.0 475.7C815.4 474.8 816.0 474.5 817.2 470.4C818.5 466.3 820.2 458.4 822.5 451.3C824.8 444.2 828.2 435.1 831.0 428.0C833.8 420.9 836.7 414.5 839.5 408.8C842.3 403.1 844.8 398.2 848.0 394.0C851.2 389.8 855.8 385.7 858.6 383.4C861.4 381.1 862.9 380.7 865.0 380.0C867.1 379.3 870.2 379.2 871.3 379.0C870.9 377.6 870.2 373.8 869.2 370.6C868.2 367.4 866.7 363.9 865.0 360.0C863.3 356.1 861.5 351.0 859.0 347.0C856.5 343.0 853.2 338.8 850.0 336.0C846.8 333.2 841.7 331.0 840.0 330.0L782.5 350.0L672.5 390.0L650.0 396.0L615.0 405.0C610.8 404.6 606.7 404.3 590.0 402.5C573.3 400.7 536.7 396.8 515.0 394.0C493.3 391.2 479.6 390.0 460.0 386.0C440.4 382.0 412.1 373.8 397.5 370.0C382.9 366.2 376.7 364.2 372.5 363.0Z" fill="#0b5ad2" stroke="#6f6f78" stroke-width="0.9" />
<path d="M465.0 268.0L394.0 359.0L372.5 362.5C376.7 363.8 382.9 366.1 397.5 370.0C412.1 373.9 440.4 382.0 460.0 386.0C479.6 390.0 493.3 391.2 515.0 394.0C536.7 396.8 573.3 400.7 590.0 402.5C606.7 404.3 610.8 404.6 615.0 405.0L650.0 396.0L672.5 390.0L782.5 350.0L840.0 330.0L812.5 270.0C793.8 271.0 735.4 274.7 700.0 276.0C664.6 277.3 639.2 279.3 600.0 278.0C560.8 276.7 487.5 269.7 465.0 268.0Z" fill="#000" />
<path d="M419.0 326.5L399.5 351.0C399.1 350.0 397.7 347.0 397.2 345.0C396.7 343.0 396.5 341.0 396.5 339.0C396.5 337.0 396.6 334.9 397.0 333.0C397.4 331.1 397.8 328.8 399.0 327.5C400.2 326.2 401.8 325.6 404.0 325.2C406.2 324.8 409.5 324.8 412.0 325.0C414.5 325.2 417.8 326.2 419.0 326.5Z" fill="#000" />
<path d="M465.3 270.0L394.8 358.3C401.5 361.1 415.8 369.7 435.0 375.0C454.2 380.3 485.0 386.2 510.0 390.0C535.0 393.8 564.2 396.0 585.0 397.5C605.8 399.0 624.2 399.4 635.0 399.0C645.8 398.6 647.5 395.7 650.0 395.0C651.3 385.3 655.5 356.3 658.0 337.0C660.5 317.7 663.8 288.7 665.0 279.0C655.8 278.7 627.5 277.6 610.0 277.0C592.5 276.4 576.7 276.2 560.0 275.5C543.3 274.8 525.8 273.4 510.0 272.5C494.2 271.6 472.8 270.4 465.3 270.0Z" fill="#cccccc" stroke="#444" stroke-width="0.6" />
<path d="M407.5 353.5C410.0 349.6 416.7 338.1 422.5 330.0C428.3 321.9 436.7 311.9 442.5 305.0C448.3 298.1 453.3 292.5 457.5 288.8C461.7 285.0 462.9 283.8 467.5 282.5C472.1 281.2 473.8 280.9 485.0 281.2C496.2 281.6 521.2 283.2 535.0 284.5C548.8 285.8 562.1 288.2 567.5 289.0C562.1 289.3 546.2 290.4 535.0 290.8C523.8 291.1 509.2 290.6 500.0 291.2C490.8 291.9 485.8 292.2 480.0 294.5C474.2 296.8 471.2 299.1 465.0 305.0C458.8 310.9 449.6 323.2 442.5 330.0C435.4 336.8 428.3 342.1 422.5 346.0C416.7 349.9 410.0 352.2 407.5 353.5Z" fill="#dfe0e4" />
<path d="M681.0 279.0L761.0 274.0C762.8 280.3 768.4 299.3 772.0 312.0C775.6 324.7 780.8 343.7 782.5 350.0L672.5 390.0C672.9 380.8 673.6 353.5 675.0 335.0C676.4 316.5 680.0 288.3 681.0 279.0Z" fill="#cccccc" stroke="#444" stroke-width="0.5" />
<path d="M772.5 273.0L812.5 271.0L840.0 330.0L792.5 346.0C790.9 340.0 786.3 322.2 783.0 310.0C779.7 297.8 774.2 279.2 772.5 273.0Z" fill="#cccccc" stroke="#444" stroke-width="0.5" />
<path d="M465.0 267.5C467.5 266.2 474.2 262.2 480.0 260.0C485.8 257.8 493.3 255.9 500.0 254.4C506.7 252.9 513.3 251.9 520.0 251.0C526.7 250.1 533.3 249.6 540.0 249.0C546.7 248.4 550.0 248.1 560.0 247.6C570.0 247.1 586.7 246.4 600.0 246.0C613.3 245.6 626.7 245.5 640.0 245.4C653.3 245.3 669.6 245.0 680.0 245.3C690.4 245.6 691.7 246.2 702.5 247.0C713.3 247.8 731.7 248.5 745.0 250.0C758.3 251.5 773.3 254.2 782.5 256.0C791.7 257.8 795.6 259.0 800.0 260.5C804.4 262.0 806.9 263.6 809.0 264.8C811.1 266.1 812.4 267.0 812.6 268.0C812.9 269.0 813.4 270.1 810.5 270.6C807.6 271.1 803.8 270.6 795.0 271.0C786.2 271.4 770.0 272.2 757.5 272.8C745.0 273.4 734.6 273.8 720.0 274.5C705.4 275.2 688.3 276.6 670.0 277.0C651.7 277.4 628.3 277.2 610.0 277.0C591.7 276.8 576.7 276.2 560.0 275.5C543.3 274.8 525.8 273.8 510.0 272.5C494.2 271.2 472.5 268.3 465.0 267.5Z" fill="#fff" stroke="#000" stroke-width="1.6" />
<path d="M465.0 267.5C472.5 268.3 494.2 271.2 510.0 272.5C525.8 273.8 543.3 274.8 560.0 275.5C576.7 276.2 591.7 276.8 610.0 277.0C628.3 277.2 651.7 277.4 670.0 277.0C688.3 276.6 705.4 275.2 720.0 274.5C734.6 273.8 745.0 273.4 757.5 272.8C770.0 272.2 786.2 271.4 795.0 271.0C803.8 270.6 807.6 270.8 810.5 270.4C813.4 270.0 812.1 268.8 812.4 268.5" fill="none" stroke="#000" stroke-width="2.8" />
<path d="M702 247.5L707.5 240 L715 187.5" stroke="#000" stroke-width="3" fill="none"/>
<path d="M701.5 248L708 239.5L714.5 248Z" fill="#000"/>
<circle cx="717" cy="182" r="5" fill="#f4f4f4" stroke="#000" stroke-width="1.2"/>
<path d="M383.0 368.0C378.8 369.5 367.6 373.1 357.5 377.1C347.4 381.1 334.2 386.3 322.5 392.0C310.8 397.7 297.7 404.6 287.5 411.3C277.3 418.0 269.5 425.0 261.3 432.3C253.1 439.6 244.5 448.5 238.5 455.0C232.5 461.5 227.7 468.8 225.5 471.5L238.5 474.5C239.7 472.7 242.3 467.6 245.5 463.8C248.7 460.0 252.2 456.5 257.8 451.5C263.4 446.5 270.9 439.7 278.8 434.0C286.7 428.3 294.8 423.4 305.0 417.4C315.2 411.4 328.3 403.9 340.0 398.1C351.7 392.3 364.9 386.8 375.0 382.4C385.1 378.0 396.2 373.3 400.5 371.5L383.0 368.0Z" fill="#fff" />
<path d="M525.0 395.5C520.0 397.3 505.8 402.0 495.0 406.3C484.2 410.6 471.7 415.7 460.0 421.1C448.3 426.5 436.7 432.5 425.0 438.6C413.3 444.7 401.7 451.0 390.0 457.9C378.3 464.8 365.5 472.6 355.0 479.8C344.5 487.0 331.7 497.5 327.0 501.0L355.0 511.5C359.4 508.2 372.6 498.3 381.3 492.0C390.1 485.7 397.3 480.2 407.5 473.6C417.7 467.0 430.8 459.2 442.5 452.6C454.2 446.1 465.8 440.1 477.5 434.3C489.2 428.5 502.1 422.6 512.5 417.6C522.9 412.6 532.5 407.5 540.0 404.5C547.5 401.5 554.6 400.3 557.5 399.5L525.0 395.5Z" fill="#fff" />
<path d="M287.5 431.4C290.4 432.0 297.7 433.1 305.0 434.9C312.3 436.6 323.7 440.0 331.3 441.9C338.9 443.8 346.9 445.0 350.5 446.3C354.1 447.6 353.4 448.6 352.8 449.8C352.2 451.0 350.6 453.5 347.0 453.5C343.4 453.5 337.1 451.3 331.3 449.8C325.5 448.3 318.1 446.4 312.0 444.5C305.9 442.6 298.4 440.1 294.5 438.4C290.6 436.6 289.6 435.2 288.4 434.0C287.2 432.8 287.6 431.8 287.5 431.4Z" fill="#000" />
<path d="M264.8 448L257 453.5L322.5 474.3Q328 476 332.5 473.5L354.9 457.6M316.4 450.6L340 455.9L334.8 461.1" stroke="#8c9cc4" stroke-width="1" fill="none"/>
<path d="M237.4 408.0C234.9 409.6 227.3 413.0 222.5 417.5C217.7 422.0 212.4 428.6 208.5 435.0C204.6 441.4 200.9 449.6 198.9 456.0C196.9 462.4 196.3 468.5 196.3 473.5C196.3 478.5 197.9 482.2 198.9 485.8C199.9 489.4 201.8 493.8 202.4 495.4C201.7 493.2 196.7 487.4 198.0 482.3C199.3 477.2 206.2 471.2 210.3 464.8C214.4 458.4 218.7 451.1 222.5 443.8C226.3 436.5 230.5 427.0 233.0 421.0C235.5 415.0 236.7 410.2 237.4 408.0Z" fill="#fff" stroke="#777" stroke-width="0.8" />
<path d="M190.1 541.0C195.5 543.8 211.3 551.8 222.5 557.6C233.7 563.4 245.8 570.8 257.5 576.0C269.2 581.2 280.8 585.3 292.5 589.1C304.2 592.9 315.8 596.3 327.5 598.8C339.2 601.3 352.1 602.7 362.5 604.0C372.9 605.3 383.8 606.1 390.0 606.6C396.2 607.1 392.3 606.6 400.0 607.0C407.7 607.4 428.0 607.8 436.0 609.0C444.0 610.2 444.8 611.2 448.0 614.0C451.2 616.8 454.0 621.7 455.0 626.0C456.0 630.3 455.2 636.2 454.0 640.0C452.8 643.8 450.3 646.7 448.0 649.0C445.7 651.3 441.3 653.2 440.0 654.0" fill="none" stroke="#000" stroke-width="1" />
<path d="M391.0 564.0C399.2 564.8 425.2 568.0 440.0 569.0C454.8 570.0 469.2 570.1 480.0 570.0C490.8 569.9 500.8 568.8 505.0 568.6" fill="none" stroke="#8a8a8a" stroke-width="0.8" />
<path d="M207.5 477.0C204.7 479.6 203.9 484.2 203.0 488.0C202.1 491.8 201.5 496.2 202.0 500.0C202.5 503.8 202.6 507.2 206.0 510.5C209.4 513.8 211.0 514.9 222.5 520.0C234.0 525.1 257.5 534.4 275.0 541.0C292.5 547.6 312.9 554.7 327.5 559.4C342.1 564.1 353.8 566.8 362.5 569.0C371.2 571.2 375.7 572.3 380.0 572.6C384.3 572.9 386.7 572.6 388.5 571.0C390.3 569.4 391.6 567.8 391.0 563.0C390.4 558.2 387.5 548.4 385.0 542.5C382.5 536.6 379.3 531.9 376.0 527.5C372.7 523.1 370.2 519.3 365.0 516.0C359.8 512.7 352.5 510.5 345.0 507.5C337.5 504.5 328.3 500.9 320.0 498.0C311.7 495.1 303.3 492.6 295.0 490.0C286.7 487.4 278.3 484.9 270.0 482.5C261.7 480.1 253.3 477.2 245.0 475.5C236.7 473.8 226.2 472.2 220.0 472.5C213.8 472.8 210.3 474.4 207.5 477.0Z" fill="#d8d8d8" stroke="#000" stroke-width="1" />
<path d="M211.0 490.0C211.2 486.4 211.7 484.8 213.5 483.0C215.3 481.2 218.4 480.1 222.0 479.5C225.6 478.9 227.0 477.8 235.0 479.5C243.0 481.2 255.8 485.3 270.0 490.0C284.2 494.7 307.5 502.9 320.0 507.5C332.5 512.1 338.3 514.4 345.0 517.5C351.7 520.6 355.8 523.1 360.0 526.0C364.2 528.9 367.2 531.3 370.0 535.0C372.8 538.7 375.6 544.5 377.0 548.0C378.4 551.5 378.5 553.6 378.5 556.0C378.5 558.4 378.2 561.2 377.0 562.5C375.8 563.8 376.6 564.8 371.3 564.0C366.0 563.2 358.1 561.7 345.0 557.6C331.9 553.5 310.0 545.6 292.5 539.3C275.0 533.0 251.7 524.6 240.0 520.0C228.3 515.4 227.1 514.1 222.5 511.5C217.9 508.9 214.4 508.1 212.5 504.5C210.6 500.9 210.8 493.6 211.0 490.0Z" fill="#000" />
<path d="M198.0 553.3C202.1 555.6 212.6 562.2 222.5 567.3C232.4 572.4 245.8 578.8 257.5 583.9C269.2 589.0 280.8 593.7 292.5 597.9C304.2 602.1 317.9 606.4 327.5 609.3C337.1 612.2 345.3 613.4 350.3 615.4C355.3 617.4 355.9 618.7 357.3 621.5C358.7 624.3 358.9 628.5 358.7 632.0C358.5 635.5 357.5 640.2 356.4 642.5C355.3 644.8 356.8 646.0 352.0 645.7C347.2 645.4 337.4 643.7 327.5 640.8C317.6 637.9 304.2 633.2 292.5 628.5C280.8 623.8 267.7 618.0 257.5 612.8C247.3 607.5 238.6 602.2 231.3 597.0C224.0 591.8 218.5 586.5 213.8 581.3C209.1 576.0 205.9 570.2 203.3 565.5C200.7 560.8 198.9 555.3 198.0 553.3Z" fill="#000" />
<ellipse cx="431.6" cy="629.4" rx="12.8" ry="15" fill="#c4c4c4" stroke="#000" stroke-width="1" transform="rotate(-12 431 629)"/>
<ellipse cx="431.6" cy="629.4" rx="8.5" ry="11" fill="#e2e2e2" stroke="#333" stroke-width="0.8" transform="rotate(-12 431.5 629)"/>
<ellipse cx="464" cy="511.3" rx="60.5" ry="47.5" fill="#fff" stroke="#666" stroke-width="0.6" transform="rotate(-34.7 464 511.3)"/>
<clipPath id="lens"><ellipse cx="460.7" cy="511.7" rx="51.9" ry="44.3" transform="rotate(-35 460.7 511.7)"/></clipPath>
<ellipse cx="460.7" cy="511.7" rx="51.9" ry="44.3" fill="#eef2fd" stroke="#7f87a8" stroke-width="0.8" transform="rotate(-35 460.7 511.7)"/>
<g clip-path="url(#lens)">
<path d="M421.0 499.7C422.2 500.6 426.4 502.4 428.5 505.0C430.6 507.6 433.4 511.8 433.6 515.6C433.9 519.4 432.6 524.0 430.0 528.0C427.4 532.0 420.0 537.8 418.0 539.8L400.0 540.0L400.0 500.0L421.0 499.7Z" fill="#dfe7fb" stroke="#7f87a8" stroke-width="0.7" />
</g>
<ellipse cx="460.7" cy="511.7" rx="49" ry="41.5" fill="none" stroke="#7f87a8" stroke-width="0.7" transform="rotate(-35 460.7 511.7)"/>
<ellipse cx="477.3" cy="493.75" rx="13.4" ry="18" fill="#fff" stroke="#666" stroke-width="0.8" transform="rotate(4 477.3 493.75)"/>
<path d="M438.3 526.6C437.2 527.5 433.3 529.9 431.5 532.0C429.7 534.1 427.8 537.1 427.3 539.0C426.8 540.9 427.6 542.3 428.3 543.5C429.0 544.7 429.6 545.1 431.2 546.0C432.9 546.9 435.7 548.2 438.0 548.8C440.3 549.4 444.1 549.6 445.3 549.7C444.5 548.2 441.8 543.7 440.6 540.6C439.4 537.5 438.7 533.6 438.3 531.2C437.9 528.9 438.3 527.4 438.3 526.6Z" fill="#fb9450" />
<ellipse cx="453.9" cy="534.4" rx="12.4" ry="16.4" fill="#fb9450" stroke="#c9743c" stroke-width="0.5" transform="rotate(-10 453.9 534.4)"/>
<path d="M625.0 404.0C625.5 406.7 627.6 414.0 628.0 420.0C628.4 426.0 628.2 433.0 627.5 440.0C626.8 447.0 625.4 456.0 624.0 462.0C622.6 468.0 619.8 473.7 619.0 476.0" fill="none" stroke="#a2a2a2" stroke-width="1.3" />
<path d="M672.5 390.0C673.1 398.3 675.2 423.3 676.0 440.0C676.8 456.7 677.7 476.7 677.5 490.0C677.3 503.3 676.2 508.3 675.0 520.0C673.8 531.7 670.8 553.3 670.0 560.0" fill="none" stroke="#a2a2a2" stroke-width="1.3" />
<path d="M787.5 351.0C789.1 352.8 794.4 357.2 797.0 362.0C799.6 366.8 801.6 371.2 803.0 380.0C804.4 388.8 805.5 403.3 805.5 415.0C805.5 426.7 804.1 438.8 803.0 450.0C801.9 461.2 799.7 477.1 799.0 482.5" fill="none" stroke="#a2a2a2" stroke-width="1.3" />
<path d="M840 330L782.5 350L672.5 390L650 396L615 405" stroke="#777" stroke-width="1" fill="none"/>
<path d="M629 437.5L651 429L651 447L628 457Z" fill="#c8c8c8" stroke="#000" stroke-width="0.8"/>
<ellipse cx="654.5" cy="438" rx="6" ry="9.5" fill="#d8d8d8" stroke="#000" stroke-width="0.8" transform="rotate(10 654.5 438)"/>
<ellipse cx="729" cy="373.2" rx="27.3" ry="20" fill="#000" transform="rotate(-6 729 373.2)"/>
<path d="M709.0 362.0C705.7 359.7 704.8 367.7 702.0 372.0C699.2 376.3 694.7 383.8 692.0 388.0C689.3 392.2 686.7 394.2 686.0 397.0C685.3 399.8 686.3 402.9 688.0 405.0C689.7 407.1 693.3 409.1 696.0 409.4C698.7 409.7 702.2 408.6 704.0 407.0C705.8 405.4 706.8 402.0 707.0 400.0C707.2 398.0 705.2 396.8 705.5 395.0C705.8 393.2 706.2 390.5 709.0 389.0C711.8 387.5 722.0 390.5 722.0 386.0C722.0 381.5 712.3 364.3 709.0 362.0Z" fill="#000" />
<ellipse cx="791" cy="388" rx="10" ry="7.5" fill="#e4e4e4" stroke="#777" stroke-width="0.6" transform="rotate(-15 791 388)"/>
<path d="M780 389L801.5 381L803.5 384.5L786 392L780.5 393Z" fill="#9a9a9a" stroke="#666" stroke-width="0.5"/>
<path d="M518.0 614.0C517.8 618.3 516.7 631.3 517.0 640.0C517.3 648.7 518.5 659.0 520.0 666.0C521.5 673.0 522.7 677.7 526.0 682.0C529.3 686.3 534.3 689.3 540.0 692.0C545.7 694.7 553.3 696.5 560.0 698.0C566.7 699.5 575.7 700.7 580.0 701.0C584.3 701.3 584.0 701.0 586.0 700.0C588.0 699.0 589.7 697.5 592.0 695.0C594.3 692.5 597.2 690.0 600.0 685.0C602.8 680.0 606.5 671.7 609.0 665.0C611.5 658.3 613.2 652.2 615.0 645.0C616.8 637.8 618.8 628.8 620.0 622.0C621.2 615.2 621.5 612.3 622.0 604.0C622.5 595.7 623.3 581.7 623.0 572.0C622.7 562.3 621.5 553.0 620.0 546.0C618.5 539.0 616.3 534.3 614.0 530.0C611.7 525.7 609.5 522.0 606.0 520.0C602.5 518.0 595.2 518.3 593.0 518.0L560.0 540.0L518.0 614.0Z" fill="#000" />
<path d="M806.5 502.3C807.0 503.0 807.0 504.7 809.7 506.5C812.4 508.3 817.2 510.9 822.5 512.9C827.8 514.9 836.6 517.7 841.6 518.2C846.6 518.7 849.0 517.6 852.2 516.0C855.4 514.4 857.9 512.7 860.7 508.6C863.5 504.5 866.9 498.0 869.2 491.6C871.5 485.2 873.3 478.2 874.5 470.4C875.7 462.6 876.8 453.1 876.6 445.0C876.4 436.9 874.7 426.6 873.4 421.6C872.1 416.6 870.4 416.8 869.0 415.0C867.6 413.2 866.4 412.1 865.0 411.0C863.6 409.9 862.9 409.2 860.7 408.4C858.5 407.6 853.5 406.4 852.0 406.0L835.0 455.0L806.5 502.3Z" fill="#000" />
<g transform="translate(598.3 613.5) rotate(11.0)">
<ellipse rx="22.5" ry="71.0" fill="#c9c9c9" stroke="#000" stroke-width="0.8"/>
<path d="M-10.1 -52.9L-11.7 -49.5L-13.2 -45.5L-14.6 -41.1L-15.8 -36.3L-16.9 -31.1L-17.8 -25.6L-18.5 -19.9L-19.1 -13.9L-3.1 -7.1Z" fill="#000"/>
<path d="M-19.1 13.9L-18.5 19.9L-17.8 25.6L-16.9 31.1L-15.8 36.3L-14.6 41.1L-13.2 45.5L-11.7 49.5L-10.1 52.9L-3.1 7.1Z" fill="#000"/>
<path d="M-1.7 61.5L0.3 61.8L2.2 61.4L4.2 60.4L6.0 58.7L7.9 56.5L9.6 53.8L11.3 50.4L12.8 46.6L1.2 11.5Z" fill="#000"/>
<path d="M18.0 24.1L18.7 18.3L19.2 12.3L19.5 6.2L19.6 0.0L19.5 -6.2L19.2 -12.3L18.7 -18.3L18.0 -24.1L3.8 0.0Z" fill="#000"/>
<path d="M12.8 -46.6L11.3 -50.4L9.6 -53.8L7.9 -56.5L6.0 -58.7L4.2 -60.4L2.2 -61.4L0.3 -61.8L-1.7 -61.5L1.2 -11.5Z" fill="#000"/>
<ellipse rx="4.8" ry="6.4" fill="#777" stroke="#222" stroke-width="0.8"/>
<ellipse rx="2.2" ry="3.2" fill="#444"/>
</g>
<g transform="translate(855.3 463.7) rotate(8.8)">
<ellipse rx="15.2" ry="44.6" fill="#c9c9c9" stroke="#000" stroke-width="0.8"/>
<path d="M-7.2 -32.5L-8.2 -30.5L-9.1 -28.1L-9.9 -25.6L-10.7 -22.8L-11.4 -19.8L-11.9 -16.7L-12.4 -13.4L-12.8 -10.0L-2.1 -4.5Z" fill="#000"/>
<path d="M-12.8 10.0L-12.4 13.4L-11.9 16.7L-11.4 19.8L-10.7 22.8L-9.9 25.6L-9.1 28.1L-8.2 30.5L-7.2 32.5L-2.1 4.5Z" fill="#000"/>
<path d="M-0.7 38.7L0.5 38.8L1.7 38.5L2.9 37.8L4.1 36.9L5.2 35.7L6.3 34.1L7.3 32.3L8.3 30.2L0.8 7.2Z" fill="#000"/>
<path d="M12.3 13.9L12.7 10.5L13.0 7.1L13.2 3.6L13.2 0.0L13.2 -3.6L13.0 -7.1L12.7 -10.5L12.3 -13.9L2.6 0.0Z" fill="#000"/>
<path d="M8.3 -30.2L7.3 -32.3L6.3 -34.1L5.2 -35.7L4.1 -36.9L2.9 -37.8L1.7 -38.5L0.5 -38.8L-0.7 -38.7L0.8 -7.2Z" fill="#000"/>
<ellipse rx="3.2" ry="4.3" fill="#777" stroke="#222" stroke-width="0.8"/>
<ellipse rx="1.5" ry="2.1" fill="#444"/>
</g>
</svg></div>
<div id="vsb"><div class="abs" style="left:3px;top:141px;width:8px;height:273px;border-radius:4px;background:#c1c1c1"></div></div>
<div id="hsb"></div>
<div id="vdiv"></div>
<svg width="1280" height="800" viewBox="0 0 1280 800" style="position:absolute;left:-10px;top:-31px;overflow:visible;pointer-events:none">
<path d="M77.0 144.500V148M89.5 144.500V148M102.0 144.500V148M114.5 144.500V148M127.0 144.500V148M139.5 144.500V148M152.0 144.500V148M164.5 144.500V148M177.0 144.500V148M189.5 144.500V148M202.0 144.500V148M214.5 144.500V148M227.0 144.500V148M239.5 144.500V148M252.0 144.500V148M264.5 144.500V148M277.0 144.500V148M289.5 144.500V148M302.0 144.500V148M314.5 144.500V148M327.0 144.500V148M339.5 144.500V148M352.0 144.500V148M364.5 144.500V148M377.0 144.500V148M389.5 144.500V148M402.0 144.500V148M414.5 144.500V148M427.0 144.500V148M439.5 144.500V148M452.0 144.500V148M464.5 144.500V148M477.0 144.500V148M489.5 144.500V148M502.0 144.500V148M514.5 144.500V148M527.0 144.500V148M539.5 144.500V148M552.0 144.500V148M564.5 144.500V148M577.0 144.500V148M589.5 144.500V148M602.0 144.500V148M614.5 144.500V148M627.0 144.500V148M639.5 144.500V148M652.0 144.500V148M664.5 144.500V148M677.0 144.500V148M689.5 144.500V148M702.0 144.500V148M714.5 144.500V148M727.0 144.500V148M739.5 144.500V148M752.0 144.500V148M764.5 144.500V148M777.0 144.500V148M789.5 144.500V148M802.0 144.500V148M814.5 144.500V148M827.0 144.500V148M839.5 144.500V148M852.0 144.500V148M864.5 144.500V148M877.0 144.500V148M889.5 144.500V148M902.0 144.500V148M914.5 144.500V148M927.0 144.500V148M939.5 144.500V148M952.0 144.500V148M964.5 144.500V148M977.0 144.500V148M989.5 144.500V148M1002.0 144.500V148M60.500 149.0H64M60.500 161.5H64M60.500 174.0H64M60.500 186.5H64M60.500 199.0H64M60.500 211.5H64M60.500 224.0H64M60.500 236.5H64M60.500 249.0H64M60.500 261.5H64M60.500 274.0H64M60.500 286.5H64M60.500 299.0H64M60.500 311.5H64M60.500 324.0H64M60.500 336.5H64M60.500 349.0H64M60.500 361.5H64M60.500 374.0H64M60.500 386.5H64M60.500 399.0H64M60.500 411.5H64M60.500 424.0H64M60.500 436.5H64M60.500 449.0H64M60.500 461.5H64M60.500 474.0H64M60.500 486.5H64M60.500 499.0H64M60.500 511.5H64M60.500 524.0H64M60.500 536.5H64M60.500 549.0H64M60.500 561.5H64M60.500 574.0H64M60.500 586.5H64M60.500 599.0H64M60.500 611.5H64M60.500 624.0H64M60.500 636.5H64M60.500 649.0H64M60.500 661.5H64M60.500 674.0H64M60.500 686.5H64M60.500 699.0H64M60.500 711.5H64M60.500 724.0H64M60.500 736.5H64" stroke="#8a8a8a" stroke-width="1" fill="none"/>
<path d="M64 148.500H1012" stroke="#555" stroke-width="1"/>
<text x="177" y="145.300" font-family="Liberation Sans,sans-serif" font-size="10" fill="#111" text-anchor="middle">100</text>
<text x="302" y="145.300" font-family="Liberation Sans,sans-serif" font-size="10" fill="#111" text-anchor="middle">200</text>
<text x="427" y="145.300" font-family="Liberation Sans,sans-serif" font-size="10" fill="#111" text-anchor="middle">300</text>
<text x="552" y="145.300" font-family="Liberation Sans,sans-serif" font-size="10" fill="#111" text-anchor="middle">400</text>
<text x="677" y="145.300" font-family="Liberation Sans,sans-serif" font-size="10" fill="#111" text-anchor="middle">500</text>
<text x="802" y="145.300" font-family="Liberation Sans,sans-serif" font-size="10" fill="#111" text-anchor="middle">600</text>
<text x="927" y="145.300" font-family="Liberation Sans,sans-serif" font-size="10" fill="#111" text-anchor="middle">700</text>
<text x="61.600" y="224.7" font-family="Liberation Sans,sans-serif" font-size="10" fill="#111" text-anchor="middle" transform="rotate(-90 61.600 224.7)">300</text>
<text x="61.600" y="349.7" font-family="Liberation Sans,sans-serif" font-size="10" fill="#111" text-anchor="middle" transform="rotate(-90 61.600 349.7)">400</text>
<text x="61.600" y="474.7" font-family="Liberation Sans,sans-serif" font-size="10" fill="#111" text-anchor="middle" transform="rotate(-90 61.600 474.7)">500</text>
<text x="61.600" y="599.7" font-family="Liberation Sans,sans-serif" font-size="10" fill="#111" text-anchor="middle" transform="rotate(-90 61.600 599.7)">600</text>
<text x="61.600" y="724.7" font-family="Liberation Sans,sans-serif" font-size="10" fill="#111" text-anchor="middle" transform="rotate(-90 61.600 724.7)">700</text>
</svg>
<div id="rp"><div class="abs" style="left:3px;top:35.500px;width:252px;height:298.500px;border:1px solid #c3c3c3;border-radius:7px;background:#e5e5e5"></div>
<div class="abs" style="left:3px;top:339.500px;width:252px;height:281.500px;border:1px solid #c3c3c3;border-radius:7px;background:#e5e5e5"></div>
<div class="abs hum" style="left:4px;top:372.0px;width:250px;height:29.0px;background:#8f8f8f;color:#fff;font-size:12.500px;line-height:28.0px;padding-left:6px;white-space:nowrap">Accessories</div>
<div class="abs hum" style="left:4px;top:401.5px;width:250px;height:30.5px;background:#fff;color:#111;font-size:12.500px;line-height:29.5px;padding-left:6px;white-space:nowrap">Lights</div>
<div class="abs hum" style="left:4px;top:433.5px;width:250px;height:29.5px;background:#fff;color:#111;font-size:12.500px;line-height:28.5px;padding-left:6px;white-space:nowrap">Body</div>
<div class="abs hum" style="left:4px;top:464.5px;width:250px;height:29.5px;background:#fff;color:#111;font-size:12.500px;line-height:28.5px;padding-left:6px;white-space:nowrap">Wheels</div>
<div class="abs hum" style="left:4px;top:495.5px;width:250px;height:29.5px;background:#fff;color:#111;font-size:12.500px;line-height:28.5px;padding-left:6px;white-space:nowrap">Wireframe</div>
<div class="abs" style="left:4px;top:401.0px;width:250px;height:1.500px;background:#b9b9b9"></div>
<div class="abs" style="left:4px;top:432.3px;width:250px;height:1.500px;background:#b9b9b9"></div>
<div class="abs" style="left:4px;top:463.5px;width:250px;height:1.500px;background:#b9b9b9"></div>
<div class="abs" style="left:4px;top:494.5px;width:250px;height:1.500px;background:#b9b9b9"></div>
<div class="abs" style="left:4px;top:525.3px;width:250px;height:1.500px;background:#b9b9b9"></div>
<div class="abs hum" style="left:10px;top:42px;font-size:12.500px;letter-spacing:0.3px;line-height:16px;color:#111;white-space:nowrap">Fill color</div>
<div class="abs hum" style="left:10px;top:348px;font-size:12.500px;line-height:16px;color:#111;white-space:nowrap">Layers</div>
<div class="abs hum" style="left:10px;top:296px;font-size:11.500px;line-height:14px;color:#111;white-space:nowrap">Opacity</div>
<div class="abs" style="left:9px;top:65px;width:238px;height:1px;background:#b2b2b2"></div>
<svg width="258" height="624" viewBox="1013 135 258 624" style="position:absolute;left:0;top:0;overflow:visible">
<defs><filter id="ds3" x="-20%" y="-20%" width="150%" height="150%"><feGaussianBlur in="SourceAlpha" stdDeviation="0.8"/><feOffset dx="0.5" dy="1"/><feComponentTransfer><feFuncA type="linear" slope="0.55"/></feComponentTransfer><feMerge><feMergeNode/><feMergeNode in="SourceGraphic"/></feMerge></filter><linearGradient id="ggrad" x1="0" y1="1" x2="1" y2="0"><stop offset="0" stop-color="#e8420c"/><stop offset="0.5" stop-color="#c8902c"/><stop offset="1" stop-color="#86d85a"/></linearGradient><linearGradient id="ggear" x1="0" y1="0" x2="1" y2="1"><stop offset="0" stop-color="#c8c8c8"/><stop offset="1" stop-color="#8a8a8a"/></linearGradient><linearGradient id="gled" x1="0" y1="0" x2="1" y2="0"><stop offset="0" stop-color="#2aa12a"/><stop offset="0.45" stop-color="#5fe052"/><stop offset="1" stop-color="#2aa12a"/></linearGradient><linearGradient id="ggold" x1="0" y1="0" x2="0" y2="1"><stop offset="0" stop-color="#e9c562"/><stop offset="1" stop-color="#c39a35"/></linearGradient><linearGradient id="ggray" x1="0" y1="0" x2="0" y2="1"><stop offset="0" stop-color="#dcdcdc"/><stop offset="1" stop-color="#b4b4b4"/></linearGradient><linearGradient id="ggray2" x1="0" y1="0" x2="0" y2="1"><stop offset="0" stop-color="#858585"/><stop offset="1" stop-color="#6c6c6c"/></linearGradient></defs>
<rect x="1023.0" y="207.0" width="17.500" height="17.500" fill="#cdcdcd"/>
<path d="M1029.2 213.2l5 5M1034.2 213.2l-5 5" stroke="#8f8f8f" stroke-width="2.400"/>
<rect x="1045.2" y="207.2" width="17" height="17" fill="#ffd5d5" stroke="rgba(0,0,0,0.28)" stroke-width="0.7"/>
<rect x="1067.2" y="207.2" width="17" height="17" fill="#ffbfc2" stroke="rgba(0,0,0,0.28)" stroke-width="0.7"/>
<rect x="1089.2" y="207.2" width="17" height="17" fill="#ffa9ae" stroke="rgba(0,0,0,0.28)" stroke-width="0.7"/>
<rect x="1111.2" y="207.2" width="17" height="17" fill="#ff8087" stroke="rgba(0,0,0,0.28)" stroke-width="0.7"/>
<rect x="1133.2" y="207.2" width="17" height="17" fill="#fc5560" stroke="rgba(0,0,0,0.28)" stroke-width="0.7"/>
<rect x="1155.2" y="207.2" width="17" height="17" fill="#fb2c36" stroke="rgba(0,0,0,0.28)" stroke-width="0.7"/>
<rect x="1177.2" y="207.2" width="17" height="17" fill="#fa0a1c" stroke="rgba(0,0,0,0.28)" stroke-width="0.7"/>
<rect x="1199.2" y="207.2" width="17" height="17" fill="#d10014" stroke="rgba(0,0,0,0.28)" stroke-width="0.7"/>
<rect x="1221.2" y="207.2" width="17" height="17" fill="#a2000f" stroke="rgba(0,0,0,0.28)" stroke-width="0.7"/>
<rect x="1243.2" y="207.2" width="17" height="17" fill="#6a0008" stroke="rgba(0,0,0,0.28)" stroke-width="0.7"/>
<rect x="1023.2" y="229.2" width="17" height="17" fill="#ffffff" stroke="rgba(0,0,0,0.28)" stroke-width="0.7"/>
<rect x="1045.2" y="229.2" width="17" height="17" fill="#ffdbd6" stroke="rgba(0,0,0,0.28)" stroke-width="0.7"/>
<rect x="1067.2" y="229.2" width="17" height="17" fill="#ffc9c0" stroke="rgba(0,0,0,0.28)" stroke-width="0.7"/>
<rect x="1089.2" y="229.2" width="17" height="17" fill="#ffb5a7" stroke="rgba(0,0,0,0.28)" stroke-width="0.7"/>
<rect x="1111.2" y="229.2" width="17" height="17" fill="#fe937e" stroke="rgba(0,0,0,0.28)" stroke-width="0.7"/>
<rect x="1133.2" y="229.2" width="17" height="17" fill="#fd7757" stroke="rgba(0,0,0,0.28)" stroke-width="0.7"/>
<rect x="1155.2" y="229.2" width="17" height="17" fill="#fd5434" stroke="rgba(0,0,0,0.28)" stroke-width="0.7"/>
<rect x="1177.2" y="229.2" width="17" height="17" fill="#fc3515" stroke="rgba(0,0,0,0.28)" stroke-width="0.7"/>
<rect x="1199.2" y="229.2" width="17" height="17" fill="#d42b12" stroke="rgba(0,0,0,0.28)" stroke-width="0.7"/>
<rect x="1221.2" y="229.2" width="17" height="17" fill="#a2210e" stroke="rgba(0,0,0,0.28)" stroke-width="0.7"/>
<rect x="1243.2" y="229.2" width="17" height="17" fill="#6f1d09" stroke="rgba(0,0,0,0.28)" stroke-width="0.7"/>
<rect x="1023.2" y="251.2" width="17" height="17" fill="#e6e6e6" stroke="rgba(0,0,0,0.28)" stroke-width="0.7"/>
<rect x="1045.2" y="251.2" width="17" height="17" fill="#ffe4d3" stroke="rgba(0,0,0,0.28)" stroke-width="0.7"/>
<rect x="1067.2" y="251.2" width="17" height="17" fill="#ffd5bd" stroke="rgba(0,0,0,0.28)" stroke-width="0.7"/>
<rect x="1089.2" y="251.2" width="17" height="17" fill="#ffc6a5" stroke="rgba(0,0,0,0.28)" stroke-width="0.7"/>
<rect x="1111.2" y="251.2" width="17" height="17" fill="#feab7c" stroke="rgba(0,0,0,0.28)" stroke-width="0.7"/>
<rect x="1133.2" y="251.2" width="17" height="17" fill="#fe9354" stroke="rgba(0,0,0,0.28)" stroke-width="0.7"/>
<rect x="1155.2" y="251.2" width="17" height="17" fill="#fd7b2c" stroke="rgba(0,0,0,0.28)" stroke-width="0.7"/>
<rect x="1177.2" y="251.2" width="17" height="17" fill="#fd650c" stroke="rgba(0,0,0,0.28)" stroke-width="0.7"/>
<rect x="1199.2" y="251.2" width="17" height="17" fill="#d2540c" stroke="rgba(0,0,0,0.28)" stroke-width="0.7"/>
<rect x="1221.2" y="251.2" width="17" height="17" fill="#a1410a" stroke="rgba(0,0,0,0.28)" stroke-width="0.7"/>
<rect x="1243.2" y="251.2" width="17" height="17" fill="#733d09" stroke="rgba(0,0,0,0.28)" stroke-width="0.7"/>
<rect x="1023.2" y="273.2" width="17" height="17" fill="#cccccc" stroke="rgba(0,0,0,0.28)" stroke-width="0.7"/>
<rect x="1045.2" y="273.2" width="17" height="17" fill="#fff0d4" stroke="rgba(0,0,0,0.28)" stroke-width="0.7"/>
<rect x="1067.2" y="273.2" width="17" height="17" fill="#ffe7c0" stroke="rgba(0,0,0,0.28)" stroke-width="0.7"/>
<rect x="1089.2" y="273.2" width="17" height="17" fill="#ffdcaa" stroke="rgba(0,0,0,0.28)" stroke-width="0.7"/>
<rect x="1111.2" y="273.2" width="17" height="17" fill="#fec97d" stroke="rgba(0,0,0,0.28)" stroke-width="0.7"/>
<rect x="1133.2" y="273.2" width="17" height="17" fill="#feb853" stroke="rgba(0,0,0,0.28)" stroke-width="0.7"/>
<rect x="1155.2" y="273.2" width="17" height="17" fill="#fda72c" stroke="rgba(0,0,0,0.28)" stroke-width="0.7"/>
<rect x="1177.2" y="273.2" width="17" height="17" fill="#fd9a0c" stroke="rgba(0,0,0,0.28)" stroke-width="0.7"/>
<rect x="1199.2" y="273.2" width="17" height="17" fill="#ca8618" stroke="rgba(0,0,0,0.28)" stroke-width="0.7"/>
<rect x="1221.2" y="273.2" width="17" height="17" fill="#a06a12" stroke="rgba(0,0,0,0.28)" stroke-width="0.7"/>
<rect x="1243.2" y="273.2" width="17" height="17" fill="#634c08" stroke="rgba(0,0,0,0.28)" stroke-width="0.7"/>
<rect x="1023.2" y="295.2" width="17" height="17" fill="#b3b3b3" stroke="rgba(0,0,0,0.28)" stroke-width="0.7"/>
<rect x="1045.2" y="295.2" width="17" height="17" fill="#fff4d0" stroke="rgba(0,0,0,0.28)" stroke-width="0.7"/>
<rect x="1067.2" y="295.2" width="17" height="17" fill="#ffedba" stroke="rgba(0,0,0,0.28)" stroke-width="0.7"/>
<rect x="1089.2" y="295.2" width="17" height="17" fill="#ffe3a1" stroke="rgba(0,0,0,0.28)" stroke-width="0.7"/>
<rect x="1111.2" y="295.2" width="17" height="17" fill="#ffda7b" stroke="rgba(0,0,0,0.28)" stroke-width="0.7"/>
<rect x="1133.2" y="295.2" width="17" height="17" fill="#fed352" stroke="rgba(0,0,0,0.28)" stroke-width="0.7"/>
<rect x="1155.2" y="295.2" width="17" height="17" fill="#fed03f" stroke="rgba(0,0,0,0.28)" stroke-width="0.7"/>
<rect x="1177.2" y="295.2" width="17" height="17" fill="#fdc92f" stroke="rgba(0,0,0,0.28)" stroke-width="0.7"/>
<rect x="1199.2" y="295.2" width="17" height="17" fill="#d0a426" stroke="rgba(0,0,0,0.28)" stroke-width="0.7"/>
<rect x="1221.2" y="295.2" width="17" height="17" fill="#9f7715" stroke="rgba(0,0,0,0.28)" stroke-width="0.7"/>
<rect x="1243.2" y="295.2" width="17" height="17" fill="#5e4c09" stroke="rgba(0,0,0,0.28)" stroke-width="0.7"/>
<rect x="1023.2" y="317.2" width="17" height="17" fill="#999999" stroke="rgba(0,0,0,0.28)" stroke-width="0.7"/>
<rect x="1045.2" y="317.2" width="17" height="17" fill="#eefad5" stroke="rgba(0,0,0,0.28)" stroke-width="0.7"/>
<rect x="1067.2" y="317.2" width="17" height="17" fill="#dcefb5" stroke="rgba(0,0,0,0.28)" stroke-width="0.7"/>
<rect x="1089.2" y="317.2" width="17" height="17" fill="#c7e595" stroke="rgba(0,0,0,0.28)" stroke-width="0.7"/>
<rect x="1111.2" y="317.2" width="17" height="17" fill="#abdb69" stroke="rgba(0,0,0,0.28)" stroke-width="0.7"/>
<rect x="1133.2" y="317.2" width="17" height="17" fill="#96d04b" stroke="rgba(0,0,0,0.28)" stroke-width="0.7"/>
<rect x="1155.2" y="317.2" width="17" height="17" fill="#8ccb42" stroke="rgba(0,0,0,0.28)" stroke-width="0.7"/>
<rect x="1177.2" y="317.2" width="17" height="17" fill="#7ec139" stroke="rgba(0,0,0,0.28)" stroke-width="0.7"/>
<rect x="1199.2" y="317.2" width="17" height="17" fill="#6da232" stroke="rgba(0,0,0,0.28)" stroke-width="0.7"/>
<rect x="1221.2" y="317.2" width="17" height="17" fill="#52801f" stroke="rgba(0,0,0,0.28)" stroke-width="0.7"/>
<rect x="1243.2" y="317.2" width="17" height="17" fill="#2f5a1a" stroke="rgba(0,0,0,0.28)" stroke-width="0.7"/>
<rect x="1023.2" y="339.2" width="17" height="17" fill="#808080" stroke="rgba(0,0,0,0.28)" stroke-width="0.7"/>
<rect x="1045.2" y="339.2" width="17" height="17" fill="#d8f8d5" stroke="rgba(0,0,0,0.28)" stroke-width="0.7"/>
<rect x="1067.2" y="339.2" width="17" height="17" fill="#b0eaab" stroke="rgba(0,0,0,0.28)" stroke-width="0.7"/>
<rect x="1089.2" y="339.2" width="17" height="17" fill="#89dc83" stroke="rgba(0,0,0,0.28)" stroke-width="0.7"/>
<rect x="1111.2" y="339.2" width="17" height="17" fill="#5fce5a" stroke="rgba(0,0,0,0.28)" stroke-width="0.7"/>
<rect x="1133.2" y="339.2" width="17" height="17" fill="#3ec33b" stroke="rgba(0,0,0,0.28)" stroke-width="0.7"/>
<rect x="1155.2" y="339.2" width="17" height="17" fill="#33b840" stroke="rgba(0,0,0,0.28)" stroke-width="0.7"/>
<rect x="1177.2" y="339.2" width="17" height="17" fill="#2cae3d" stroke="rgba(0,0,0,0.28)" stroke-width="0.7"/>
<rect x="1199.2" y="339.2" width="17" height="17" fill="#249a3d" stroke="rgba(0,0,0,0.28)" stroke-width="0.7"/>
<rect x="1221.2" y="339.2" width="17" height="17" fill="#1f8538" stroke="rgba(0,0,0,0.28)" stroke-width="0.7"/>
<rect x="1243.2" y="339.2" width="17" height="17" fill="#0e5a2c" stroke="rgba(0,0,0,0.28)" stroke-width="0.7"/>
<rect x="1023.2" y="361.2" width="17" height="17" fill="#666666" stroke="rgba(0,0,0,0.28)" stroke-width="0.7"/>
<rect x="1045.2" y="361.2" width="17" height="17" fill="#bfe4ef" stroke="rgba(0,0,0,0.28)" stroke-width="0.7"/>
<rect x="1067.2" y="361.2" width="17" height="17" fill="#9ad0d5" stroke="rgba(0,0,0,0.28)" stroke-width="0.7"/>
<rect x="1089.2" y="361.2" width="17" height="17" fill="#82c3c4" stroke="rgba(0,0,0,0.28)" stroke-width="0.7"/>
<rect x="1111.2" y="361.2" width="17" height="17" fill="#55afaa" stroke="rgba(0,0,0,0.28)" stroke-width="0.7"/>
<rect x="1133.2" y="361.2" width="17" height="17" fill="#36a09b" stroke="rgba(0,0,0,0.28)" stroke-width="0.7"/>
<rect x="1155.2" y="361.2" width="17" height="17" fill="#2a958f" stroke="rgba(0,0,0,0.28)" stroke-width="0.7"/>
<rect x="1177.2" y="361.2" width="17" height="17" fill="#1f8784" stroke="rgba(0,0,0,0.28)" stroke-width="0.7"/>
<rect x="1199.2" y="361.2" width="17" height="17" fill="#1d7a7a" stroke="rgba(0,0,0,0.28)" stroke-width="0.7"/>
<rect x="1221.2" y="361.2" width="17" height="17" fill="#166a6e" stroke="rgba(0,0,0,0.28)" stroke-width="0.7"/>
<rect x="1243.2" y="361.2" width="17" height="17" fill="#064548" stroke="rgba(0,0,0,0.28)" stroke-width="0.7"/>
<rect x="1023.2" y="383.2" width="17" height="17" fill="#333333" stroke="rgba(0,0,0,0.28)" stroke-width="0.7"/>
<rect x="1045.2" y="383.2" width="17" height="17" fill="#a9ccff" stroke="rgba(0,0,0,0.28)" stroke-width="0.7"/>
<rect x="1067.2" y="383.2" width="17" height="17" fill="#95bbff" stroke="rgba(0,0,0,0.28)" stroke-width="0.7"/>
<rect x="1089.2" y="383.2" width="17" height="17" fill="#82acff" stroke="rgba(0,0,0,0.28)" stroke-width="0.7"/>
<rect x="1111.2" y="383.2" width="17" height="17" fill="#5895fb" stroke="rgba(0,0,0,0.28)" stroke-width="0.7"/>
<rect x="1133.2" y="383.2" width="17" height="17" fill="#2f7cfb" stroke="rgba(0,0,0,0.28)" stroke-width="0.7"/>
<rect x="1155.2" y="383.2" width="17" height="17" fill="#2068e3" stroke="rgba(0,0,0,0.28)" stroke-width="0.7"/>
<rect x="1177.2" y="383.2" width="17" height="17" fill="#105ad3" stroke="rgba(0,0,0,0.28)" stroke-width="0.7"/>
<rect x="1199.2" y="383.2" width="17" height="17" fill="#0b50c0" stroke="rgba(0,0,0,0.28)" stroke-width="0.7"/>
<rect x="1221.2" y="383.2" width="17" height="17" fill="#0a48ae" stroke="rgba(0,0,0,0.28)" stroke-width="0.7"/>
<rect x="1243.2" y="383.2" width="17" height="17" fill="#032f63" stroke="rgba(0,0,0,0.28)" stroke-width="0.7"/>
<rect x="1023.2" y="405.2" width="17" height="17" fill="#000000" stroke="rgba(0,0,0,0.28)" stroke-width="0.7"/>
<rect x="1045.2" y="405.2" width="17" height="17" fill="#dcd5ef" stroke="rgba(0,0,0,0.28)" stroke-width="0.7"/>
<rect x="1067.2" y="405.2" width="17" height="17" fill="#cbc0e2" stroke="rgba(0,0,0,0.28)" stroke-width="0.7"/>
<rect x="1089.2" y="405.2" width="17" height="17" fill="#bfa9d6" stroke="rgba(0,0,0,0.28)" stroke-width="0.7"/>
<rect x="1111.2" y="405.2" width="17" height="17" fill="#a586bf" stroke="rgba(0,0,0,0.28)" stroke-width="0.7"/>
<rect x="1133.2" y="405.2" width="17" height="17" fill="#9364ad" stroke="rgba(0,0,0,0.28)" stroke-width="0.7"/>
<rect x="1155.2" y="405.2" width="17" height="17" fill="#874a92" stroke="rgba(0,0,0,0.28)" stroke-width="0.7"/>
<rect x="1177.2" y="405.2" width="17" height="17" fill="#842870" stroke="rgba(0,0,0,0.28)" stroke-width="0.7"/>
<rect x="1199.2" y="405.2" width="17" height="17" fill="#6c2463" stroke="rgba(0,0,0,0.28)" stroke-width="0.7"/>
<rect x="1221.2" y="405.2" width="17" height="17" fill="#56205a" stroke="rgba(0,0,0,0.28)" stroke-width="0.7"/>
<rect x="1243.2" y="405.2" width="17" height="17" fill="#341a3a" stroke="rgba(0,0,0,0.28)" stroke-width="0.7"/>
<g filter="url(#ds3)"><path d="M1040.3 152.0L1040.2 153.3L1038.1 154.0L1037.8 155.0L1039.0 156.9L1038.3 158.0L1036.1 157.6L1035.3 158.3L1035.4 160.5L1034.3 161.1L1032.5 159.6L1031.5 159.8L1030.5 161.8L1029.2 161.7L1028.5 159.6L1027.5 159.3L1025.6 160.5L1024.5 159.8L1024.9 157.6L1024.2 156.8L1022.0 156.9L1021.4 155.8L1022.9 154.0L1022.7 153.0L1020.7 152.0L1020.8 150.7L1022.9 150.0L1023.2 149.0L1022.0 147.1L1022.7 146.0L1024.9 146.4L1025.7 145.7L1025.6 143.5L1026.7 142.9L1028.5 144.4L1029.5 144.2L1030.5 142.2L1031.8 142.3L1032.5 144.4L1033.5 144.7L1035.4 143.5L1036.5 144.2L1036.1 146.4L1036.8 147.2L1039.0 147.1L1039.6 148.2L1038.1 150.0L1038.3 151.0Z M1030.5 148.6a3.400 3.400 0 1 0 0.010 0Z" fill="url(#ggear)" stroke="#777" stroke-width="0.6" fill-rule="evenodd"/></g>
<circle cx="1030.5" cy="152.0" r="5.800" fill="none" stroke="#a4a4a4" stroke-width="1.100"/>
<path d="M1030.1 148.3a3.900 3.900 0 0 0 0 7.400" fill="none" stroke="#444" stroke-width="1.500"/>
<path d="M1052.500 143.700H1072" stroke="#3c3c3c" stroke-width="2.200" stroke-linecap="round"/>
<path d="M1052.500 148H1072.500" stroke="#444" stroke-width="1.800" stroke-dasharray="3.500 1.500"/>
<path d="M1052.500 151.800H1072.500" stroke="#666" stroke-width="1.200" stroke-dasharray="1.200 1.800"/>
<path d="M1052.500 155.200H1072.500" stroke="#555" stroke-width="1.500"/>
<path d="M1052.500 158.500H1072.500" stroke="#888" stroke-width="1.300"/>
<path d="M1052.500 161.800H1072.500" stroke="#aaa" stroke-width="1.200"/>
<rect x="1084.5" y="143.3" width="5.6" height="5.6" fill="#c44a3c"/>
<rect x="1086.2" y="145.0" width="2.200" height="2.200" fill="#4a4a4a" opacity="0.85"/>
<rect x="1091.4" y="143.3" width="5.6" height="5.6" fill="#d88a50"/>
<rect x="1093.1" y="145.0" width="2.200" height="2.200" fill="#4a4a4a" opacity="0.85"/>
<rect x="1099.0" y="144.0" width="4.2" height="4.2" fill="#f0e85c"/>
<rect x="1100.0" y="145.0" width="2.200" height="2.200" fill="#4a4a4a" opacity="0.85"/>
<rect x="1084.5" y="150.2" width="5.6" height="5.6" fill="#3f8a3c"/>
<rect x="1086.2" y="151.9" width="2.200" height="2.200" fill="#4a4a4a" opacity="0.85"/>
<rect x="1091.4" y="150.2" width="5.6" height="5.6" fill="#4f9a48"/>
<rect x="1093.1" y="151.9" width="2.200" height="2.200" fill="#4a4a4a" opacity="0.85"/>
<rect x="1099.0" y="150.9" width="4.2" height="4.2" fill="#3f6a3c"/>
<rect x="1100.0" y="151.9" width="2.200" height="2.200" fill="#4a4a4a" opacity="0.85"/>
<rect x="1084.5" y="157.1" width="5.6" height="5.6" fill="#2f4a9a"/>
<rect x="1086.2" y="158.8" width="2.200" height="2.200" fill="#4a4a4a" opacity="0.85"/>
<rect x="1091.4" y="157.1" width="5.6" height="5.6" fill="#3f9ad8"/>
<rect x="1093.1" y="158.8" width="2.200" height="2.200" fill="#4a4a4a" opacity="0.85"/>
<rect x="1099.0" y="157.8" width="4.2" height="4.2" fill="#b0a8e0"/>
<rect x="1100.0" y="158.8" width="2.200" height="2.200" fill="#4a4a4a" opacity="0.85"/>
<rect x="1112" y="138" width="28" height="27.700" rx="4" fill="#7b7b7b"/>
<rect x="1116.7" y="142.4" width="5.800" height="5.800" fill="#f03a1c"/>
<rect x="1123.5" y="142.4" width="5.800" height="5.800" fill="#fb9a30"/>
<rect x="1130.3" y="142.4" width="5.800" height="5.800" fill="#fbf23a"/>
<rect x="1116.7" y="149.2" width="5.800" height="5.800" fill="#1f9a1f"/>
<rect x="1123.5" y="149.2" width="5.800" height="5.800" fill="#5fc83a"/>
<rect x="1130.3" y="149.2" width="5.800" height="5.800" fill="#d2fbd2"/>
<rect x="1116.7" y="156.0" width="5.800" height="5.800" fill="#0a2f8f"/>
<rect x="1123.5" y="156.0" width="5.800" height="5.800" fill="#2a9afb"/>
<rect x="1130.3" y="156.0" width="5.800" height="5.800" fill="#d2d2fb"/>
<text x="1147.400" y="151.300" font-family="Liberation Sans,sans-serif" font-weight="bold" font-size="13.500" fill="#828282" stroke="#828282" stroke-width="0.700">A</text>
<rect x="1160.300" y="142.0" width="7.600" height="1.600" fill="#909090"/>
<rect x="1160.300" y="145.9" width="7.600" height="1.600" fill="#909090"/>
<rect x="1160.300" y="149.6" width="7.600" height="1.600" fill="#909090"/>
<rect x="1148" y="153.5" width="20" height="1.600" fill="#909090"/>
<rect x="1148" y="157.1" width="20" height="1.600" fill="#909090"/>
<rect x="1148" y="160.8" width="20" height="1.600" fill="#909090"/>
<g stroke="#777" fill="#777"><path d="M1178.300 160L1181.300 164M1198.900 140.400L1201.900 144.400" stroke-width="0.900"/><path d="M1181 161L1186.300 155.800M1194.300 148L1199.500 143" stroke-width="1.600"/><path d="M1180 162L1186.800 159.300L1183.300 155.300ZM1200.400 142.300L1193.600 144.700L1197 148.700Z" stroke="none"/></g>
<text x="1190.300" y="154" font-family="Liberation Sans,sans-serif" font-weight="bold" font-size="5.500" fill="#333" text-anchor="middle" transform="rotate(-44 1190.300 152.200)">99.9</text>
<g filter="url(#ds3)"><rect x="1212.600" y="142.300" width="19" height="19.300" fill="#fff" stroke="#8a8a8a" stroke-width="0.500"/></g>
<path d="M1216.500 143V161M1220.300 143V161M1224.100 143V161M1227.900 143V161M1213 146.200H1231M1213 150H1231M1213 153.800H1231M1213 157.600H1231" stroke="#eeeeee" stroke-width="0.700"/>
<g filter="url(#ds3)"><rect x="1244.600" y="142.300" width="19.100" height="19.300" fill="#fff" stroke="#8a8a8a" stroke-width="0.500"/></g>
<rect x="1247.300" y="146.300" width="13.700" height="10.700" fill="#8a8a8a" stroke="#555" stroke-width="1"/>
<path d="M1248.500 155.500l3.500-4.500 2.500 2.800 1.800-1.600 3.500 3.300z" fill="#c9c9c9"/><circle cx="1257.800" cy="149.300" r="1.100" fill="#d4d4d4"/>
<rect x="1184.100" y="173" width="24" height="23.800" rx="4" fill="#7b7b7b"/>
<rect x="1187.6" y="176.7" width="4.500" height="4.500" fill="#f03a1c"/>
<rect x="1193.6" y="176.7" width="4.500" height="4.500" fill="#fb9a30"/>
<rect x="1199.6" y="176.7" width="4.500" height="4.500" fill="#fbf23a"/>
<rect x="1187.6" y="182.7" width="4.500" height="4.500" fill="#1f9a1f"/>
<rect x="1193.6" y="182.7" width="4.500" height="4.500" fill="#5fc83a"/>
<rect x="1199.6" y="182.7" width="4.500" height="4.500" fill="#d2fbd2"/>
<rect x="1187.6" y="188.7" width="4.500" height="4.500" fill="#0a2f8f"/>
<rect x="1193.6" y="188.7" width="4.500" height="4.500" fill="#2a9afb"/>
<rect x="1199.6" y="188.7" width="4.500" height="4.500" fill="#d2d2fb"/>
<rect x="1216" y="177" width="4.300" height="4.600" fill="#f0283a"/><rect x="1221.800" y="177" width="4.300" height="4.600" fill="#3cc43c"/><rect x="1227.600" y="177" width="4.300" height="4.600" fill="#2a82f0"/>
<path d="M1216 186.300H1232M1216 189.400H1232M1216 192.500H1232" stroke="#c8c8c8" stroke-width="0.900"/>
<rect x="1224.500" y="185" width="1.600" height="2.600" fill="#999"/><rect x="1221.700" y="188.100" width="1.600" height="2.600" fill="#999"/><rect x="1226" y="191.200" width="1.600" height="2.600" fill="#999"/>
<rect x="1244.600" y="177.700" width="15.200" height="15" fill="url(#ggrad)"/>
<path d="M1244.500 192.700L1259.600 177.500" stroke="#333" stroke-width="0.800"/><circle cx="1244.400" cy="192.800" r="1.900" fill="#fff" stroke="#555" stroke-width="0.700"/><circle cx="1259.700" cy="177.400" r="1.900" fill="#fff" stroke="#555" stroke-width="0.700"/>
<rect x="1085" y="439" width="127.500" height="3" rx="1.500" fill="#c2c2c2"/>
<circle cx="1091.300" cy="440" r="7.300" fill="#fff" stroke="#bdbdbd" stroke-width="0.900"/>
<rect x="1226.500" y="430.800" width="34" height="18.500" fill="#fff" stroke="#c6c6c6" stroke-width="1"/>
<path d="M1210 486.200H1222.600" stroke="#4a4a4a" stroke-width="1.400"/><path d="M1213.600 485.500v-1.400q0-0.800 0.800-0.800h3.800q0.800 0 0.800 0.800v1.400" fill="none" stroke="#4a4a4a" stroke-width="1.100"/>
<path d="M1211.300 487.800h10l-0.500 10.400q0 0.500-0.500 0.500h-8q-0.500 0-0.500-0.500z" fill="#4a4a4a"/><path d="M1214 489.300V497M1216.300 489.300V497M1218.600 489.300V497" stroke="#e5e5e5" stroke-width="0.900"/>
<path d="M1239 491H1253M1246 484V498" stroke="#4a4a4a" stroke-width="1.500"/>
<rect x="1209.700" y="510.6" width="13.300" height="20" rx="2" fill="#e6e6e6" stroke="#b0b0b0" stroke-width="0.700"/>
<rect x="1213.200" y="514.0" width="6" height="14" rx="2" fill="url(#gled)" stroke="#1b6a1b" stroke-width="0.800"/>
<path d="M1243 519.8v-2.800a3 3.200 0 0 1 6 0v2.800" fill="none" stroke="#727272" stroke-width="1.600"/>
<rect x="1240.300" y="519.5" width="11.300" height="8" rx="0.800" fill="url(#ggray2)" stroke="#727272" stroke-width="0.500"/>
<rect x="1209.700" y="541.9" width="13.300" height="20" rx="2" fill="#e6e6e6" stroke="#b0b0b0" stroke-width="0.700"/>
<rect x="1213.200" y="545.3" width="6" height="14" rx="2" fill="url(#gled)" stroke="#1b6a1b" stroke-width="0.800"/>
<path d="M1243 551.1v-2.800a3 3.200 0 0 1 6 0v2.800" fill="none" stroke="#b9b9b9" stroke-width="1.600"/>
<rect x="1240.300" y="550.8" width="11.300" height="8" rx="0.800" fill="url(#ggray)" stroke="#b9b9b9" stroke-width="0.500"/>
<rect x="1209.700" y="573.0" width="13.300" height="20" rx="2" fill="#e6e6e6" stroke="#b0b0b0" stroke-width="0.700"/>
<rect x="1213.200" y="576.4" width="6" height="14" rx="2" fill="url(#gled)" stroke="#1b6a1b" stroke-width="0.800"/>
<path d="M1243 582.2v-2.800a3 3.200 0 0 1 6 0v2.800" fill="none" stroke="#b08a35" stroke-width="1.600"/>
<rect x="1240.300" y="581.9" width="11.300" height="8" rx="0.800" fill="url(#ggold)" stroke="#b08a35" stroke-width="0.500"/>
<rect x="1209.700" y="604.0" width="13.300" height="20" rx="2" fill="#e6e6e6" stroke="#b0b0b0" stroke-width="0.700"/>
<rect x="1213.200" y="607.4" width="6" height="14" rx="2" fill="url(#gled)" stroke="#1b6a1b" stroke-width="0.800"/>
<path d="M1243 613.2v-2.800a3 3.200 0 0 1 6 0v2.800" fill="none" stroke="#b08a35" stroke-width="1.600"/>
<rect x="1240.300" y="612.9" width="11.300" height="8" rx="0.800" fill="url(#ggold)" stroke="#b08a35" stroke-width="0.500"/>
<rect x="1209.700" y="635.0" width="13.300" height="20" rx="2" fill="#e6e6e6" stroke="#b0b0b0" stroke-width="0.700"/>
<rect x="1213.200" y="638.4" width="6" height="14" rx="2" fill="url(#gled)" stroke="#1b6a1b" stroke-width="0.800"/>
<path d="M1243 644.2v-2.800a3 3.200 0 0 1 6 0v2.800" fill="none" stroke="#b9b9b9" stroke-width="1.600"/>
<rect x="1240.300" y="643.9" width="11.300" height="8" rx="0.800" fill="url(#ggray)" stroke="#b9b9b9" stroke-width="0.500"/>
<g filter="url(#ds3)"><rect x="1023.300" y="729.300" width="9.500" height="13" fill="#a8a8a8" stroke="#7a7a7a" stroke-width="0.600"/><rect x="1026.700" y="732.200" width="10" height="13.300" fill="#fff" stroke="#8a8a8a" stroke-width="0.600"/></g>
<rect x="1047" y="729.300" width="14" height="5.200" fill="#9a9a9a" stroke="#777" stroke-width="0.600"/>
<rect x="1047" y="739.300" width="14.500" height="6.500" fill="#fff" stroke="#8a8a8a" stroke-width="0.700"/>
<path d="M1052.500 732.500h3.400v4.500h2.200l-3.900 4.300l-3.900-4.300h2.200z" fill="#fff" stroke="#555" stroke-width="0.800" stroke-linejoin="round"/>
<rect x="1071" y="736.800" width="136" height="3" rx="1.500" fill="#3d8ee6"/>
<circle cx="1212.300" cy="738.300" r="7.300" fill="#fff" stroke="#bdbdbd" stroke-width="0.900"/>
<rect x="1227.500" y="728.500" width="34" height="19" fill="#fff" stroke="#c6c6c6" stroke-width="1"/>
</svg>
<div class="abs hum" style="left:218px;top:298px;font-size:11px;line-height:14px;color:#111">1</div>
<div class="abs hum" style="left:219px;top:596.500px;font-size:11px;line-height:14px;color:#111">100</div></div>
<div id="bot"><svg width="1280" height="60" viewBox="0 740 1280 60" style="position:absolute;left:-10px;top:-20px;overflow:visible">
<defs><linearGradient id="gbtn2" x1="0" y1="0" x2="0" y2="1"><stop offset="0" stop-color="#5aa9fb"/><stop offset="1" stop-color="#1f7df5"/></linearGradient></defs>
<rect x="65" y="746" width="45.500" height="13" fill="#fff"/>
<rect x="110" y="746" width="17" height="13" fill="url(#gbtn2)"/>
<path d="M115.500 751l3-2.800 3 2.800M115.500 754.200l3 2.800 3-2.800" stroke="#fff" stroke-width="1.400" fill="none" stroke-linecap="round" stroke-linejoin="round"/>
<text x="67.500" y="756.300" font-family="Liberation Sans,sans-serif" font-size="10.800" fill="#222">125%</text>
<rect x="142" y="749" width="840" height="7.500" rx="3.750" fill="#c1c1c1"/>
<path d="M136.8 768.3H153.8" stroke="#6a6a6a" stroke-width="1.100"/>
<path d="M136.9 777.8C136.9 770.8 140.3 768.3 145.3 768.3C150.3 768.3 153.7 770.8 153.7 777.8" stroke="#6a6a6a" stroke-width="1.100" fill="none"/>
<circle cx="136.8" cy="768.3" r="1.6" fill="#f2f2f2" stroke="#444" stroke-width="0.8"/>
<circle cx="153.8" cy="768.3" r="1.6" fill="#f2f2f2" stroke="#444" stroke-width="0.8"/>
<rect x="143.8" y="766.8" width="3.1" height="3.1" fill="#2d5fb5" stroke="#16306a" stroke-width="0.8"/>
<rect x="135.3" y="776.2" width="3.1" height="3.1" fill="#2d5fb5" stroke="#16306a" stroke-width="0.8"/>
<rect x="152.2" y="776.2" width="3.1" height="3.1" fill="#2d5fb5" stroke="#16306a" stroke-width="0.8"/>
<path d="M145.3 772.7l3.200 3.400h-1.700v3.400h-3v-3.400h-1.700z" fill="#fff" stroke="#222" stroke-width="0.8" stroke-linejoin="round"/>
<path d="M136.8 783.4H153.8" stroke="#6a6a6a" stroke-width="1.100"/>
<rect x="135.5" y="782.1" width="2.6" height="2.6" fill="#f2f2f2" stroke="#444" stroke-width="0.8"/>
<rect x="144.0" y="782.1" width="2.6" height="2.6" fill="#f2f2f2" stroke="#444" stroke-width="0.8"/>
<rect x="152.5" y="782.1" width="2.6" height="2.6" fill="#f2f2f2" stroke="#444" stroke-width="0.8"/>
<path d="M171.8 768.3H188.8" stroke="#6a6a6a" stroke-width="1.100"/>
<path d="M171.9 782.4C171.9 775.4 175.3 768.3 180.3 768.3C185.3 768.3 188.7 775.4 188.7 782.4" stroke="#6a6a6a" stroke-width="1.100" fill="none"/>
<path d="M171.9 782.4H188.7" stroke="#6a6a6a" stroke-width="1.100"/>
<circle cx="171.8" cy="768.3" r="1.6" fill="#f2f2f2" stroke="#444" stroke-width="0.8"/>
<circle cx="188.8" cy="768.3" r="1.6" fill="#f2f2f2" stroke="#444" stroke-width="0.8"/>
<rect x="178.8" y="766.8" width="3.1" height="3.1" fill="#2d5fb5" stroke="#16306a" stroke-width="0.8"/>
<rect x="170.3" y="780.9" width="3.1" height="3.1" fill="#2d5fb5" stroke="#16306a" stroke-width="0.8"/>
<rect x="187.2" y="780.9" width="3.1" height="3.1" fill="#2d5fb5" stroke="#16306a" stroke-width="0.8"/>
<path d="M206.7 768.3H223.7" stroke="#6a6a6a" stroke-width="1.100"/>
<path d="M207.0 782.4C207.0 775.4 210.2 768.3 215.2 768.3C220.2 768.3 223.4 775.4 223.4 782.4" stroke="#6a6a6a" stroke-width="1.100" fill="none"/>
<circle cx="206.7" cy="768.3" r="1.6" fill="#f2f2f2" stroke="#444" stroke-width="0.8"/>
<circle cx="223.7" cy="768.3" r="1.6" fill="#f2f2f2" stroke="#444" stroke-width="0.8"/>
<rect x="213.6" y="766.8" width="3.1" height="3.1" fill="#2d5fb5" stroke="#16306a" stroke-width="0.8"/>
<rect x="205.4" y="780.9" width="3.1" height="3.1" fill="#d4242c" stroke="#6a1015" stroke-width="0.8"/>
<rect x="221.8" y="780.9" width="3.1" height="3.1" fill="#d4242c" stroke="#6a1015" stroke-width="0.8"/>
<path d="M211.7 782.400h7M213.0 780.200l4.400 4.400M217.4 780.200l-4.400 4.400" stroke="#d4242c" stroke-width="1"/>
<path d="M246.0 770.400h9M250.5 765.900v9" stroke="#6a6a6a" stroke-width="1.500"/>
<path d="M241.5 780.9H259.5" stroke="#6a6a6a" stroke-width="1.100"/>
<rect x="239.9" y="778.9" width="4.0" height="4.0" fill="#d4242c" stroke="#6a1015" stroke-width="0.8"/>
<rect x="248.5" y="778.9" width="4.0" height="4.0" fill="#8fc4f2" stroke="#2a4a7a" stroke-width="0.8"/>
<rect x="256.8" y="778.9" width="4.0" height="4.0" fill="#d4242c" stroke="#6a1015" stroke-width="0.8"/>
<path d="M281.7 770.400h7" stroke="#7a7a7a" stroke-width="1.700"/>
<path d="M276.2 780.9H294.2" stroke="#6a6a6a" stroke-width="1.100"/>
<rect x="283.2" y="778.9" width="4.0" height="4.0" fill="#d4242c" stroke="#6a1015" stroke-width="0.8"/>
<path d="M311.0 767.8H329.0" stroke="#6a6a6a" stroke-width="1.100"/>
<rect x="318.0" y="765.8" width="4.0" height="4.0" fill="#d4242c" stroke="#6a1015" stroke-width="0.8"/>
<path d="M320.0 778.6l3.200-3.400h-1.700v-3.400h-3v3.400h-1.700z" fill="#fff" stroke="#222" stroke-width="0.8" stroke-linejoin="round"/>
<path d="M311.0 782.0H329.0" stroke="#6a6a6a" stroke-width="1.100"/>
<rect x="314.5" y="780.0" width="4.0" height="4.0" fill="#8fc4f2" stroke="#2a4a7a" stroke-width="0.8"/>
<rect x="321.9" y="780.0" width="4.0" height="4.0" fill="#8fc4f2" stroke="#2a4a7a" stroke-width="0.8"/>
<path d="M346.3 767.6H364.3" stroke="#6a6a6a" stroke-width="1.100"/>
<rect x="349.7" y="765.6" width="4.0" height="4.0" fill="#8fc4f2" stroke="#2a4a7a" stroke-width="0.8"/>
<rect x="356.7" y="765.6" width="4.0" height="4.0" fill="#d4242c" stroke="#6a1015" stroke-width="0.8"/>
<path d="M355.3 778.6l3.200-3.400h-1.700v-3.400h-3v3.400h-1.700z" fill="#fff" stroke="#222" stroke-width="0.8" stroke-linejoin="round"/>
<path d="M346.3 782.0H364.3" stroke="#6a6a6a" stroke-width="1.100"/>
<rect x="353.3" y="780.0" width="4.0" height="4.0" fill="#8fc4f2" stroke="#2a4a7a" stroke-width="0.8"/>
<path d="M387 766.600H397.200M387 766.600L390 775.200" stroke="#6a6a6a" stroke-width="0.9"/>
<path d="M387 766.600C388.500 774 386.500 779 381.750 782.400M387 766.600C393.500 768.500 398 774 399 782.400" stroke="#6a6a6a" stroke-width="1.100" fill="none"/>
<circle cx="397.2" cy="766.6" r="1.6" fill="#f2f2f2" stroke="#444" stroke-width="0.8"/>
<circle cx="390.3" cy="775.2" r="1.6" fill="#f2f2f2" stroke="#444" stroke-width="0.8"/>
<rect x="385.4" y="765.1" width="3.1" height="3.1" fill="#d4242c" stroke="#6a1015" stroke-width="0.8"/>
<rect x="380.2" y="780.9" width="3.1" height="3.1" fill="#2d5fb5" stroke="#16306a" stroke-width="0.8"/>
<rect x="397.4" y="780.9" width="3.1" height="3.1" fill="#2d5fb5" stroke="#16306a" stroke-width="0.8"/>
<path d="M418.6 766.6H434.6" stroke="#6a6a6a" stroke-width="1.100"/>
<path d="M416.6 782.4C416.6 775.4 420.2 766.6 425.2 766.6C430.2 766.6 433.8 775.4 433.8 782.4" stroke="#6a6a6a" stroke-width="1.100" fill="none"/>
<circle cx="419.0" cy="766.6" r="1.6" fill="#f2f2f2" stroke="#444" stroke-width="0.8"/>
<circle cx="434.6" cy="766.6" r="1.6" fill="#f2f2f2" stroke="#444" stroke-width="0.8"/>
<rect x="424.1" y="765.1" width="3.1" height="3.1" fill="#d4242c" stroke="#6a1015" stroke-width="0.8"/>
<rect x="415.1" y="780.9" width="3.1" height="3.1" fill="#2d5fb5" stroke="#16306a" stroke-width="0.8"/>
<rect x="432.2" y="780.9" width="3.1" height="3.1" fill="#2d5fb5" stroke="#16306a" stroke-width="0.8"/>
<path d="M452.2 766.6H468.7" stroke="#6a6a6a" stroke-width="1.100"/>
<path d="M452.1 782.4C452.1 775.4 455.5 766.6 460.5 766.6C465.5 766.6 468.9 775.4 468.9 782.4" stroke="#6a6a6a" stroke-width="1.100" fill="none"/>
<circle cx="452.2" cy="766.6" r="1.6" fill="#f2f2f2" stroke="#444" stroke-width="0.8"/>
<circle cx="468.7" cy="766.6" r="1.6" fill="#f2f2f2" stroke="#444" stroke-width="0.8"/>
<rect x="458.9" y="765.1" width="3.1" height="3.1" fill="#d4242c" stroke="#6a1015" stroke-width="0.8"/>
<rect x="450.6" y="780.9" width="3.1" height="3.1" fill="#2d5fb5" stroke="#16306a" stroke-width="0.8"/>
<rect x="467.3" y="780.9" width="3.1" height="3.1" fill="#2d5fb5" stroke="#16306a" stroke-width="0.8"/>
<path d="M486.6 774.700C490.2 766 500.2 766 503.8 774.700" stroke="#6a6a6a" stroke-width="1.100" fill="none"/>
<path d="M486.6 766.600V774.700M503.8 766.600V774.700" stroke="#6a6a6a" stroke-width="0.9"/>
<circle cx="486.6" cy="766.6" r="1.6" fill="#f2f2f2" stroke="#444" stroke-width="0.8"/>
<rect x="502.2" y="765.0" width="3.2" height="3.2" fill="#f2f2f2" stroke="#444" stroke-width="0.8"/>
<rect x="485.0" y="773.2" width="3.1" height="3.1" fill="#d4242c" stroke="#6a1015" stroke-width="0.8"/>
<rect x="502.2" y="773.2" width="3.1" height="3.1" fill="#d4242c" stroke="#6a1015" stroke-width="0.8"/>
<path d="M495.2 778.9l3.200-3.400h-1.700v-3.400h-3v3.400h-1.700z" fill="#fff" stroke="#222" stroke-width="0.8" stroke-linejoin="round"/>
<path d="M486.6 782.4H503.8" stroke="#6a6a6a" stroke-width="1.100"/>
<rect x="485.0" y="780.9" width="3.1" height="3.1" fill="#2d5fb5" stroke="#16306a" stroke-width="0.8"/>
<rect x="502.2" y="780.9" width="3.1" height="3.1" fill="#2d5fb5" stroke="#16306a" stroke-width="0.8"/>
<path d="M522.0 767.3H538.6" stroke="#6a6a6a" stroke-width="1.100"/>
<rect x="520.5" y="765.8" width="3.1" height="3.1" fill="#d4242c" stroke="#6a1015" stroke-width="0.8"/>
<rect x="537.0" y="765.8" width="3.1" height="3.1" fill="#d4242c" stroke="#6a1015" stroke-width="0.8"/>
<path d="M522.0 774.700C525.3 783.500 535.3 783.500 538.6 774.700" stroke="#6a6a6a" stroke-width="1.100" fill="none"/>
<path d="M522.0 774.700V783M538.6 774.700V783" stroke="#6a6a6a" stroke-width="0.9"/>
<rect x="520.5" y="773.2" width="3.1" height="3.1" fill="#2d5fb5" stroke="#16306a" stroke-width="0.8"/>
<rect x="537.0" y="773.2" width="3.1" height="3.1" fill="#2d5fb5" stroke="#16306a" stroke-width="0.8"/>
<path d="M530.3 778.9l3.200-3.400h-1.700v-3.400h-3v3.400h-1.700z" fill="#fff" stroke="#222" stroke-width="0.8" stroke-linejoin="round"/>
<circle cx="522.0" cy="783.0" r="1.6" fill="#f2f2f2" stroke="#444" stroke-width="0.8"/>
<circle cx="538.6" cy="783.0" r="1.6" fill="#f2f2f2" stroke="#444" stroke-width="0.8"/>
</svg></div>
</div>
</body>
</html>
